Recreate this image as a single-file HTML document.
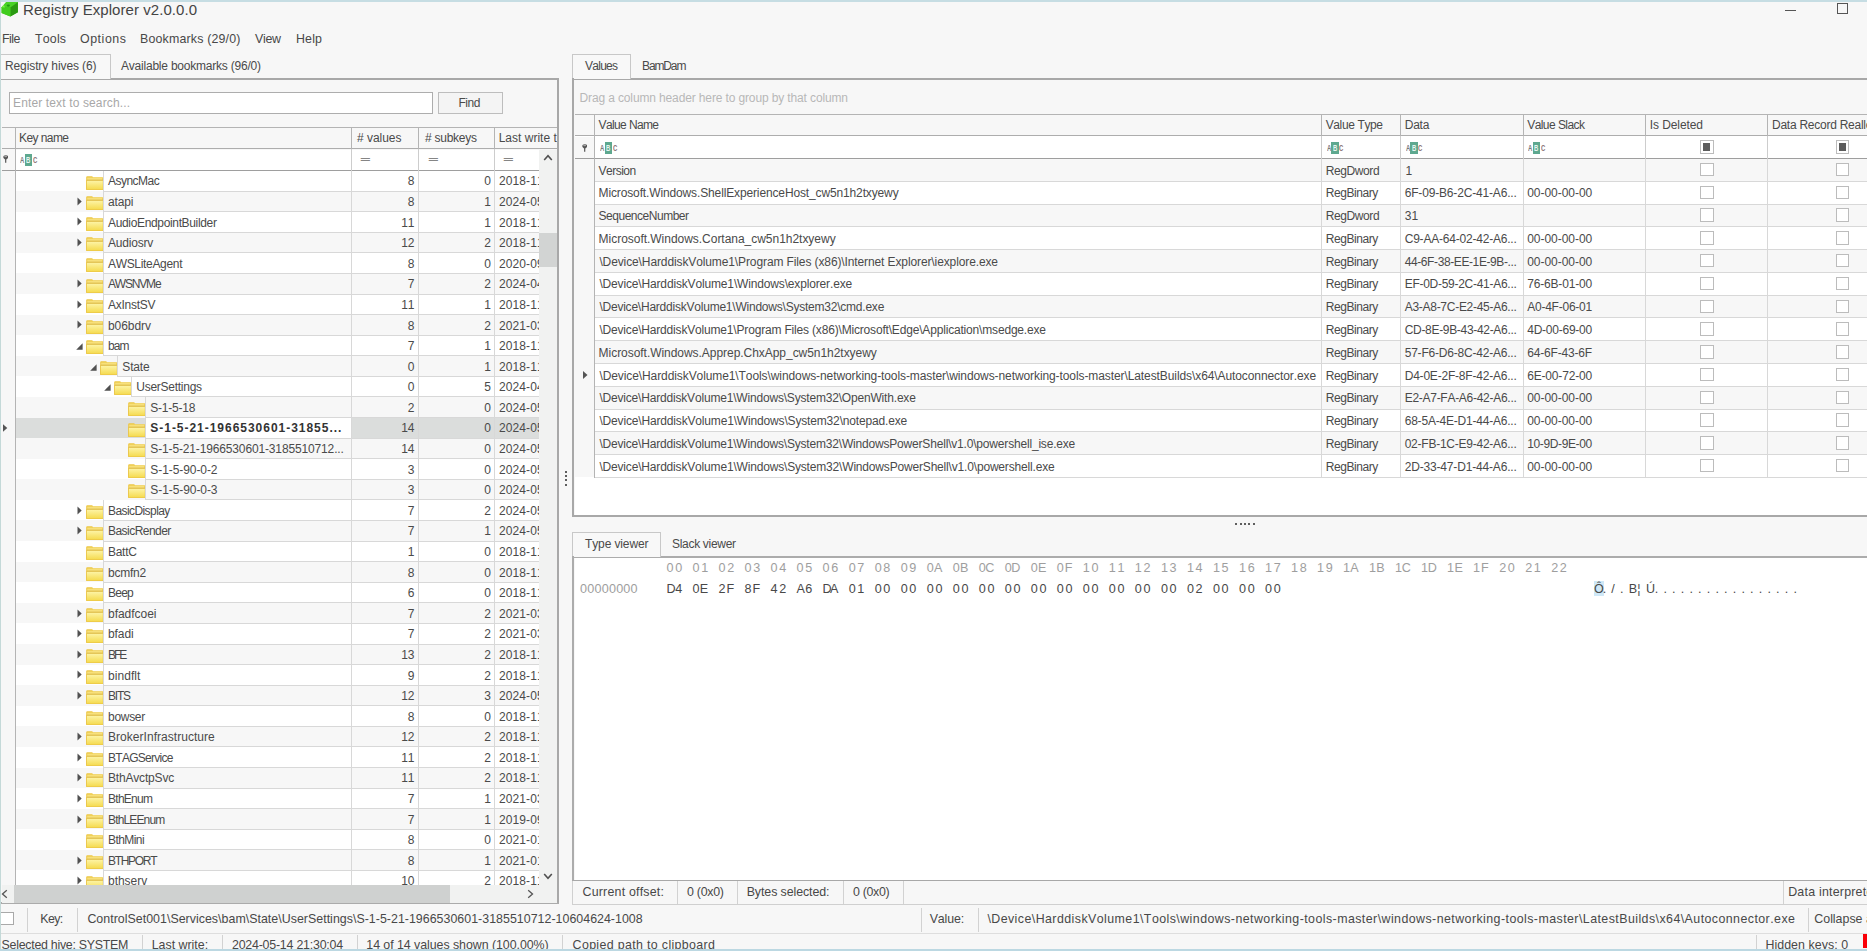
<!DOCTYPE html><html><head><meta charset="utf-8"><title>Registry Explorer v2.0.0.0</title><style>
*{box-sizing:border-box}
html,body{margin:0;padding:0}
body{width:1867px;height:951px;position:relative;overflow:hidden;background:#f7f7f7;font-family:"Liberation Sans",sans-serif;font-size:12px;color:#4a4a4a;line-height:1;font-kerning:none}
.a{position:absolute;white-space:nowrap}
.t{position:absolute;white-space:nowrap;font-size:12px;color:#4a4a4a;height:16px;line-height:16px}
.s{position:absolute;white-space:nowrap;font-size:12.4px;color:#484848;height:18px;line-height:18px}
.r{text-align:right}
.clip{overflow:hidden}
</style></head><body>
<svg class="a" style="left:0px;top:0px" width="20" height="18" viewBox="0 0 20 18">
<polygon points="1.6,7.3 6.3,2 17.9,2 17.9,12.3 10.3,16.4 1.6,13" fill="#3ec41c"/>
<polygon points="1.6,7.3 6.3,2 17.9,2 10.6,7.6" fill="#48d226"/>
<polygon points="10.4,7.6 17.9,2.2 17.9,12.3 10.4,16.4" fill="#2b9a12"/>
<polygon points="1.6,7.3 10.4,7.6 10.4,16.4 1.6,13" fill="#41cc1e"/>
<ellipse cx="8.3" cy="5.6" rx="1.6" ry="1.1" fill="#229a10"/>
<polygon points="1.6,7.3 3.8,4.8 5,7.4" fill="#7af548"/>
</svg>
<div class="a" style="left:23px;top:-0.30px;letter-spacing:0.058px;font-size:15px;color:#444;height:20px;line-height:20px">Registry Explorer v2.0.0.0</div>
<div class="a" style="left:1785px;top:9.5px;width:11px;height:1px;background:#555"></div>
<div class="a" style="left:1836.5px;top:3px;width:11.5px;height:11px;border:1px solid #555"></div>
<div class="s" style="left:2px;top:29.90px;letter-spacing:-0.492px;">File</div>
<div class="s" style="left:35px;top:29.90px;letter-spacing:0.176px;">Tools</div>
<div class="s" style="left:80px;top:29.90px;letter-spacing:0.545px;">Options</div>
<div class="s" style="left:140px;top:29.90px;letter-spacing:0.177px;">Bookmarks (29/0)</div>
<div class="s" style="left:255px;top:29.90px;letter-spacing:-0.289px;">View</div>
<div class="s" style="left:296px;top:29.90px;letter-spacing:0.169px;">Help</div>
<div class="a" style="left:0px;top:78px;width:558.9px;height:1.8px;background:#a8a8a8"></div>
<div class="a" style="left:0px;top:54px;width:111px;height:25px;border:1px solid #c8c8c8;border-bottom:none;background:#f8f8f8"></div>
<div class="t" style="left:5px;top:58.40px;letter-spacing:-0.109px;">Registry hives (6)</div>
<div class="t" style="left:121px;top:58.40px;letter-spacing:-0.215px;">Available bookmarks (96/0)</div>
<div class="a" style="left:557px;top:78px;width:1.9px;height:826px;background:#a8a8a8"></div>
<div class="a" style="left:0px;top:902.3px;width:558.9px;height:1.8px;background:#ababab"></div>
<div class="a" style="left:9px;top:92px;width:424px;height:22px;border:1px solid #adadad;background:#fff"></div>
<div class="t" style="left:13px;top:95.40px;letter-spacing:0.134px;color:#a8a8a8">Enter text to search...</div>
<div class="a" style="left:438px;top:92px;width:65px;height:22px;border:1px solid #bdbdbd;background:#f4f4f4"></div>
<div class="t" style="left:458.5px;top:95.40px;letter-spacing:-0.513px;">Find</div>
<div class="a" style="left:2px;top:127px;width:555px;height:1px;background:#b4b4b4"></div>
<div class="a" style="left:2px;top:148px;width:555px;height:1.2px;background:#adadad"></div>
<div class="a" style="left:15px;top:149.5px;width:525px;height:21px;background:#fff"></div>
<div class="a" style="left:2px;top:170px;width:538px;height:1px;background:#9e9e9e"></div>
<div class="a" style="left:14.5px;top:127px;width:1px;height:22px;background:#b4b4b4"></div>
<div class="a" style="left:14.5px;top:149px;width:1px;height:22px;background:#b4b4b4"></div>
<div class="a" style="left:351px;top:127px;width:1px;height:22px;background:#b4b4b4"></div>
<div class="a" style="left:351px;top:149px;width:1px;height:22px;background:#cdcdcd"></div>
<div class="a" style="left:418px;top:127px;width:1px;height:22px;background:#b4b4b4"></div>
<div class="a" style="left:418px;top:149px;width:1px;height:22px;background:#cdcdcd"></div>
<div class="a" style="left:494px;top:127px;width:1px;height:22px;background:#b4b4b4"></div>
<div class="a" style="left:494px;top:149px;width:1px;height:22px;background:#cdcdcd"></div>
<div class="t" style="left:19px;top:130.40px;letter-spacing:-0.575px;">Key name</div>
<div class="t" style="left:357px;top:130.40px;letter-spacing:-0.027px;"># values</div>
<div class="t" style="left:425px;top:130.40px;letter-spacing:-0.253px;"># subkeys</div>
<div class="t clip" style="left:498.7px;top:130.4px;width:57.9px;letter-spacing:0.006px">Last write timestamp</div>
<svg class="a" style="left:3px;top:155.3px" width="5.4" height="8" viewBox="0 0 5.4 8"><path d="M0.2 1.9Q0.2 0.2 2.7 0.2Q5.2 0.2 5.2 1.9Q5.2 3.2 3.3 4.6V7.8H2.1V4.6Q0.2 3.2 0.2 1.9Z" fill="#555"/><ellipse cx="2.7" cy="1.5" rx="1.5" ry="0.7" fill="#a5a5a5"/></svg>
<div class="a" style="left:20px;top:154px;height:12px;line-height:12px;font-size:8.3px;font-weight:bold;color:#7a7a7a"><span style="display:inline-block;transform:scaleX(.72);transform-origin:0 50%;width:4.5px">A</span><span style="display:inline-block;width:7.6px;height:11.7px;background:#5ea88f;color:#e6f5ef;vertical-align:top"><span style="display:inline-block;transform:scaleX(.72);transform-origin:0 50%;margin-left:1.7px">B</span></span><span style="display:inline-block;transform:scaleX(.72);transform-origin:0 50%;width:5px;margin-left:0.9px;color:#8a7474">C</span></div>
<div class="a" style="left:360px;top:152px;height:16px;line-height:16px;font-size:8.5px;font-weight:bold;color:#858585;transform-origin:0 50%;transform:scaleX(2.15)">=</div>
<div class="a" style="left:427.5px;top:152px;height:16px;line-height:16px;font-size:8.5px;font-weight:bold;color:#858585;transform-origin:0 50%;transform:scaleX(2.15)">=</div>
<div class="a" style="left:503px;top:152px;height:16px;line-height:16px;font-size:8.5px;font-weight:bold;color:#858585;transform-origin:0 50%;transform:scaleX(2.15)">=</div>
<svg width="0" height="0" style="position:absolute"><defs><linearGradient id="fg" x1="0" y1="0" x2="0" y2="1"><stop offset="0" stop-color="#fdf4a6"/><stop offset="1" stop-color="#f5db50"/></linearGradient></defs></svg>
<div class="a clip" style="left:0;top:170.5px;width:557px;height:714px">
<div class="a" style="left:15px;top:0.00px;width:525px;height:20.588px;background:#fff"></div>
<svg class="a" style="left:85.5px;top:5.1px" width="17.5" height="14" viewBox="0 0 17.5 14"><path d="M0.2 1.3Q0.2 0.2 1.3 0.2H5.8Q6.6 0.2 6.9 0.9L7.1 1.3H16.4Q17.3 1.3 17.3 2.2V13.8H0.2Z" fill="#ecc644"/><rect x="1.2" y="1.6" width="15.2" height="2.4" fill="#f7e07a"/><rect x="0.2" y="3.9" width="17.1" height="10" rx="0.6" fill="#e9c244"/><rect x="0.9" y="4.6" width="15.9" height="8.8" fill="url(#fg)"/><rect x="0.9" y="3.7" width="15.9" height="0.8" fill="#d8b546"/></svg>
<div class="t" style="left:108px;top:2.89px;letter-spacing:-0.521px;">AsyncMac</div>
<div class="t r" style="left:354.5px;width:60px;top:2.89px;">8</div>
<div class="t r" style="left:431px;width:60px;top:2.89px;">0</div>
<div class="t clip" style="left:499px;width:41px;top:2.89px;letter-spacing:0.1px">2018-11-14 06:56:33</div>
<div class="a" style="left:15px;top:20.59px;width:525px;height:20.588px;background:#f7f7f7"></div>
<svg class="a" style="left:76.5px;top:26.38px" width="6" height="9" viewBox="0 0 6 9"><path d="M0.5 0.6L4.7 4.5L0.5 8.4Z" fill="#505050"/></svg>
<svg class="a" style="left:85.5px;top:25.69px" width="17.5" height="14" viewBox="0 0 17.5 14"><path d="M0.2 1.3Q0.2 0.2 1.3 0.2H5.8Q6.6 0.2 6.9 0.9L7.1 1.3H16.4Q17.3 1.3 17.3 2.2V13.8H0.2Z" fill="#ecc644"/><rect x="1.2" y="1.6" width="15.2" height="2.4" fill="#f7e07a"/><rect x="0.2" y="3.9" width="17.1" height="10" rx="0.6" fill="#e9c244"/><rect x="0.9" y="4.6" width="15.9" height="8.8" fill="url(#fg)"/><rect x="0.9" y="3.7" width="15.9" height="0.8" fill="#d8b546"/></svg>
<div class="t" style="left:108px;top:23.48px;letter-spacing:-0.154px;">atapi</div>
<div class="t r" style="left:354.5px;width:60px;top:23.48px;">8</div>
<div class="t r" style="left:431px;width:60px;top:23.48px;">1</div>
<div class="t clip" style="left:499px;width:41px;top:23.48px;letter-spacing:0.1px">2024-05-14 21:07:11</div>
<div class="a" style="left:15px;top:41.18px;width:525px;height:20.588px;background:#fff"></div>
<svg class="a" style="left:76.5px;top:46.97px" width="6" height="9" viewBox="0 0 6 9"><path d="M0.5 0.6L4.7 4.5L0.5 8.4Z" fill="#505050"/></svg>
<svg class="a" style="left:85.5px;top:46.28px" width="17.5" height="14" viewBox="0 0 17.5 14"><path d="M0.2 1.3Q0.2 0.2 1.3 0.2H5.8Q6.6 0.2 6.9 0.9L7.1 1.3H16.4Q17.3 1.3 17.3 2.2V13.8H0.2Z" fill="#ecc644"/><rect x="1.2" y="1.6" width="15.2" height="2.4" fill="#f7e07a"/><rect x="0.2" y="3.9" width="17.1" height="10" rx="0.6" fill="#e9c244"/><rect x="0.9" y="4.6" width="15.9" height="8.8" fill="url(#fg)"/><rect x="0.9" y="3.7" width="15.9" height="0.8" fill="#d8b546"/></svg>
<div class="t" style="left:108px;top:44.07px;letter-spacing:-0.342px;">AudioEndpointBuilder</div>
<div class="t r" style="left:354.5px;width:60px;top:44.07px;">11</div>
<div class="t r" style="left:431px;width:60px;top:44.07px;">1</div>
<div class="t clip" style="left:499px;width:41px;top:44.07px;letter-spacing:0.1px">2018-11-14 06:56:33</div>
<div class="a" style="left:15px;top:61.76px;width:525px;height:20.588px;background:#f7f7f7"></div>
<svg class="a" style="left:76.5px;top:67.56px" width="6" height="9" viewBox="0 0 6 9"><path d="M0.5 0.6L4.7 4.5L0.5 8.4Z" fill="#505050"/></svg>
<svg class="a" style="left:85.5px;top:66.86px" width="17.5" height="14" viewBox="0 0 17.5 14"><path d="M0.2 1.3Q0.2 0.2 1.3 0.2H5.8Q6.6 0.2 6.9 0.9L7.1 1.3H16.4Q17.3 1.3 17.3 2.2V13.8H0.2Z" fill="#ecc644"/><rect x="1.2" y="1.6" width="15.2" height="2.4" fill="#f7e07a"/><rect x="0.2" y="3.9" width="17.1" height="10" rx="0.6" fill="#e9c244"/><rect x="0.9" y="4.6" width="15.9" height="8.8" fill="url(#fg)"/><rect x="0.9" y="3.7" width="15.9" height="0.8" fill="#d8b546"/></svg>
<div class="t" style="left:108px;top:64.66px;letter-spacing:-0.197px;">Audiosrv</div>
<div class="t r" style="left:354.5px;width:60px;top:64.66px;">12</div>
<div class="t r" style="left:431px;width:60px;top:64.66px;">2</div>
<div class="t clip" style="left:499px;width:41px;top:64.66px;letter-spacing:0.1px">2018-11-14 06:56:33</div>
<div class="a" style="left:15px;top:82.35px;width:525px;height:20.588px;background:#fff"></div>
<svg class="a" style="left:85.5px;top:87.45px" width="17.5" height="14" viewBox="0 0 17.5 14"><path d="M0.2 1.3Q0.2 0.2 1.3 0.2H5.8Q6.6 0.2 6.9 0.9L7.1 1.3H16.4Q17.3 1.3 17.3 2.2V13.8H0.2Z" fill="#ecc644"/><rect x="1.2" y="1.6" width="15.2" height="2.4" fill="#f7e07a"/><rect x="0.2" y="3.9" width="17.1" height="10" rx="0.6" fill="#e9c244"/><rect x="0.9" y="4.6" width="15.9" height="8.8" fill="url(#fg)"/><rect x="0.9" y="3.7" width="15.9" height="0.8" fill="#d8b546"/></svg>
<div class="t" style="left:108px;top:85.25px;letter-spacing:-0.321px;">AWSLiteAgent</div>
<div class="t r" style="left:354.5px;width:60px;top:85.25px;">8</div>
<div class="t r" style="left:431px;width:60px;top:85.25px;">0</div>
<div class="t clip" style="left:499px;width:41px;top:85.25px;letter-spacing:0.1px">2020-09-09 03:11:02</div>
<div class="a" style="left:15px;top:102.94px;width:525px;height:20.588px;background:#f7f7f7"></div>
<svg class="a" style="left:76.5px;top:108.73px" width="6" height="9" viewBox="0 0 6 9"><path d="M0.5 0.6L4.7 4.5L0.5 8.4Z" fill="#505050"/></svg>
<svg class="a" style="left:85.5px;top:108.04px" width="17.5" height="14" viewBox="0 0 17.5 14"><path d="M0.2 1.3Q0.2 0.2 1.3 0.2H5.8Q6.6 0.2 6.9 0.9L7.1 1.3H16.4Q17.3 1.3 17.3 2.2V13.8H0.2Z" fill="#ecc644"/><rect x="1.2" y="1.6" width="15.2" height="2.4" fill="#f7e07a"/><rect x="0.2" y="3.9" width="17.1" height="10" rx="0.6" fill="#e9c244"/><rect x="0.9" y="4.6" width="15.9" height="8.8" fill="url(#fg)"/><rect x="0.9" y="3.7" width="15.9" height="0.8" fill="#d8b546"/></svg>
<div class="t" style="left:108px;top:105.83px;letter-spacing:-1.178px;">AWSNVMe</div>
<div class="t r" style="left:354.5px;width:60px;top:105.83px;">7</div>
<div class="t r" style="left:431px;width:60px;top:105.83px;">2</div>
<div class="t clip" style="left:499px;width:41px;top:105.83px;letter-spacing:0.1px">2024-04-25 16:21:00</div>
<div class="a" style="left:15px;top:123.53px;width:525px;height:20.588px;background:#fff"></div>
<svg class="a" style="left:76.5px;top:129.32px" width="6" height="9" viewBox="0 0 6 9"><path d="M0.5 0.6L4.7 4.5L0.5 8.4Z" fill="#505050"/></svg>
<svg class="a" style="left:85.5px;top:128.63px" width="17.5" height="14" viewBox="0 0 17.5 14"><path d="M0.2 1.3Q0.2 0.2 1.3 0.2H5.8Q6.6 0.2 6.9 0.9L7.1 1.3H16.4Q17.3 1.3 17.3 2.2V13.8H0.2Z" fill="#ecc644"/><rect x="1.2" y="1.6" width="15.2" height="2.4" fill="#f7e07a"/><rect x="0.2" y="3.9" width="17.1" height="10" rx="0.6" fill="#e9c244"/><rect x="0.9" y="4.6" width="15.9" height="8.8" fill="url(#fg)"/><rect x="0.9" y="3.7" width="15.9" height="0.8" fill="#d8b546"/></svg>
<div class="t" style="left:108px;top:126.42px;letter-spacing:-0.265px;">AxInstSV</div>
<div class="t r" style="left:354.5px;width:60px;top:126.42px;">11</div>
<div class="t r" style="left:431px;width:60px;top:126.42px;">1</div>
<div class="t clip" style="left:499px;width:41px;top:126.42px;letter-spacing:0.1px">2018-11-14 06:56:33</div>
<div class="a" style="left:15px;top:144.12px;width:525px;height:20.588px;background:#f7f7f7"></div>
<svg class="a" style="left:76.5px;top:149.91px" width="6" height="9" viewBox="0 0 6 9"><path d="M0.5 0.6L4.7 4.5L0.5 8.4Z" fill="#505050"/></svg>
<svg class="a" style="left:85.5px;top:149.22px" width="17.5" height="14" viewBox="0 0 17.5 14"><path d="M0.2 1.3Q0.2 0.2 1.3 0.2H5.8Q6.6 0.2 6.9 0.9L7.1 1.3H16.4Q17.3 1.3 17.3 2.2V13.8H0.2Z" fill="#ecc644"/><rect x="1.2" y="1.6" width="15.2" height="2.4" fill="#f7e07a"/><rect x="0.2" y="3.9" width="17.1" height="10" rx="0.6" fill="#e9c244"/><rect x="0.9" y="4.6" width="15.9" height="8.8" fill="url(#fg)"/><rect x="0.9" y="3.7" width="15.9" height="0.8" fill="#d8b546"/></svg>
<div class="t" style="left:108px;top:147.01px;letter-spacing:-0.059px;">b06bdrv</div>
<div class="t r" style="left:354.5px;width:60px;top:147.01px;">8</div>
<div class="t r" style="left:431px;width:60px;top:147.01px;">2</div>
<div class="t clip" style="left:499px;width:41px;top:147.01px;letter-spacing:0.1px">2021-03-08 11:21:02</div>
<div class="a" style="left:15px;top:164.70px;width:525px;height:20.588px;background:#fff"></div>
<svg class="a" style="left:75.8px;top:172.80px" width="7" height="7" viewBox="0 0 7 7"><path d="M6.6 0.2V6.8H0.2Z" fill="#505050"/></svg>
<svg class="a" style="left:85.5px;top:169.8px" width="17.5" height="14" viewBox="0 0 17.5 14"><path d="M0.2 1.3Q0.2 0.2 1.3 0.2H5.8Q6.6 0.2 6.9 0.9L7.1 1.3H16.4Q17.3 1.3 17.3 2.2V13.8H0.2Z" fill="#ecc644"/><rect x="1.2" y="1.6" width="15.2" height="2.4" fill="#f7e07a"/><rect x="0.2" y="3.9" width="17.1" height="10" rx="0.6" fill="#e9c244"/><rect x="0.9" y="4.6" width="15.9" height="8.8" fill="url(#fg)"/><rect x="0.9" y="3.7" width="15.9" height="0.8" fill="#d8b546"/></svg>
<div class="t" style="left:108px;top:167.60px;letter-spacing:-0.920px;">bam</div>
<div class="t r" style="left:354.5px;width:60px;top:167.60px;">7</div>
<div class="t r" style="left:431px;width:60px;top:167.60px;">1</div>
<div class="t clip" style="left:499px;width:41px;top:167.60px;letter-spacing:0.1px">2018-11-14 06:56:33</div>
<div class="a" style="left:15px;top:185.29px;width:525px;height:20.588px;background:#f7f7f7"></div>
<svg class="a" style="left:89.8px;top:193.39px" width="7" height="7" viewBox="0 0 7 7"><path d="M6.6 0.2V6.8H0.2Z" fill="#505050"/></svg>
<svg class="a" style="left:99.5px;top:190.39px" width="17.5" height="14" viewBox="0 0 17.5 14"><path d="M0.2 1.3Q0.2 0.2 1.3 0.2H5.8Q6.6 0.2 6.9 0.9L7.1 1.3H16.4Q17.3 1.3 17.3 2.2V13.8H0.2Z" fill="#ecc644"/><rect x="1.2" y="1.6" width="15.2" height="2.4" fill="#f7e07a"/><rect x="0.2" y="3.9" width="17.1" height="10" rx="0.6" fill="#e9c244"/><rect x="0.9" y="4.6" width="15.9" height="8.8" fill="url(#fg)"/><rect x="0.9" y="3.7" width="15.9" height="0.8" fill="#d8b546"/></svg>
<div class="t" style="left:122.3px;top:188.19px;letter-spacing:-0.155px;">State</div>
<div class="t r" style="left:354.5px;width:60px;top:188.19px;">0</div>
<div class="t r" style="left:431px;width:60px;top:188.19px;">1</div>
<div class="t clip" style="left:499px;width:41px;top:188.19px;letter-spacing:0.1px">2018-11-14 06:56:33</div>
<div class="a" style="left:15px;top:205.88px;width:525px;height:20.588px;background:#fff"></div>
<svg class="a" style="left:103.8px;top:213.97px" width="7" height="7" viewBox="0 0 7 7"><path d="M6.6 0.2V6.8H0.2Z" fill="#505050"/></svg>
<svg class="a" style="left:113.5px;top:210.98px" width="17.5" height="14" viewBox="0 0 17.5 14"><path d="M0.2 1.3Q0.2 0.2 1.3 0.2H5.8Q6.6 0.2 6.9 0.9L7.1 1.3H16.4Q17.3 1.3 17.3 2.2V13.8H0.2Z" fill="#ecc644"/><rect x="1.2" y="1.6" width="15.2" height="2.4" fill="#f7e07a"/><rect x="0.2" y="3.9" width="17.1" height="10" rx="0.6" fill="#e9c244"/><rect x="0.9" y="4.6" width="15.9" height="8.8" fill="url(#fg)"/><rect x="0.9" y="3.7" width="15.9" height="0.8" fill="#d8b546"/></svg>
<div class="t" style="left:136.3px;top:208.77px;letter-spacing:-0.263px;">UserSettings</div>
<div class="t r" style="left:354.5px;width:60px;top:208.77px;">0</div>
<div class="t r" style="left:431px;width:60px;top:208.77px;">5</div>
<div class="t clip" style="left:499px;width:41px;top:208.77px;letter-spacing:0.1px">2024-04-25 16:21:00</div>
<div class="a" style="left:15px;top:226.47px;width:525px;height:20.588px;background:#f7f7f7"></div>
<svg class="a" style="left:127.5px;top:231.57px" width="17.5" height="14" viewBox="0 0 17.5 14"><path d="M0.2 1.3Q0.2 0.2 1.3 0.2H5.8Q6.6 0.2 6.9 0.9L7.1 1.3H16.4Q17.3 1.3 17.3 2.2V13.8H0.2Z" fill="#ecc644"/><rect x="1.2" y="1.6" width="15.2" height="2.4" fill="#f7e07a"/><rect x="0.2" y="3.9" width="17.1" height="10" rx="0.6" fill="#e9c244"/><rect x="0.9" y="4.6" width="15.9" height="8.8" fill="url(#fg)"/><rect x="0.9" y="3.7" width="15.9" height="0.8" fill="#d8b546"/></svg>
<div class="t" style="left:150.3px;top:229.36px;letter-spacing:-0.226px;">S-1-5-18</div>
<div class="t r" style="left:354.5px;width:60px;top:229.36px;">2</div>
<div class="t r" style="left:431px;width:60px;top:229.36px;">0</div>
<div class="t clip" style="left:499px;width:41px;top:229.36px;letter-spacing:0.1px">2024-05-14 21:07:11</div>
<div class="a" style="left:15px;top:247.06px;width:525px;height:20.588px;background:#dbdddc"></div>
<div class="a" style="left:145.3px;top:247.06px;width:205.7px;height:20.588px;background:#fff"></div>
<svg class="a" style="left:127.5px;top:252.16px" width="17.5" height="14" viewBox="0 0 17.5 14"><path d="M0.2 1.3Q0.2 0.2 1.3 0.2H5.8Q6.6 0.2 6.9 0.9L7.1 1.3H16.4Q17.3 1.3 17.3 2.2V13.8H0.2Z" fill="#ecc644"/><rect x="1.2" y="1.6" width="15.2" height="2.4" fill="#f7e07a"/><rect x="0.2" y="3.9" width="17.1" height="10" rx="0.6" fill="#e9c244"/><rect x="0.9" y="4.6" width="15.9" height="8.8" fill="url(#fg)"/><rect x="0.9" y="3.7" width="15.9" height="0.8" fill="#d8b546"/></svg>
<div class="t" style="left:150.3px;top:249.95px;letter-spacing:0.972px;font-weight:bold;color:#333;">S-1-5-21-1966530601-31855...</div>
<div class="t r" style="left:354.5px;width:60px;top:249.95px;">14</div>
<div class="t r" style="left:431px;width:60px;top:249.95px;">0</div>
<div class="t clip" style="left:499px;width:41px;top:249.95px;letter-spacing:0.1px">2024-05-14 21:30:04</div>
<svg class="a" style="left:3.4px;top:253.45px" width="5" height="8" viewBox="0 0 5 8"><path d="M0 0.2L4.3 4L0 7.8Z" fill="#555"/></svg>
<div class="a" style="left:15px;top:267.64px;width:525px;height:20.588px;background:#f7f7f7"></div>
<svg class="a" style="left:127.5px;top:272.74px" width="17.5" height="14" viewBox="0 0 17.5 14"><path d="M0.2 1.3Q0.2 0.2 1.3 0.2H5.8Q6.6 0.2 6.9 0.9L7.1 1.3H16.4Q17.3 1.3 17.3 2.2V13.8H0.2Z" fill="#ecc644"/><rect x="1.2" y="1.6" width="15.2" height="2.4" fill="#f7e07a"/><rect x="0.2" y="3.9" width="17.1" height="10" rx="0.6" fill="#e9c244"/><rect x="0.9" y="4.6" width="15.9" height="8.8" fill="url(#fg)"/><rect x="0.9" y="3.7" width="15.9" height="0.8" fill="#d8b546"/></svg>
<div class="t" style="left:150.3px;top:270.54px;letter-spacing:-0.144px;">S-1-5-21-1966530601-3185510712...</div>
<div class="t r" style="left:354.5px;width:60px;top:270.54px;">14</div>
<div class="t r" style="left:431px;width:60px;top:270.54px;">0</div>
<div class="t clip" style="left:499px;width:41px;top:270.54px;letter-spacing:0.1px">2024-05-14 21:07:11</div>
<div class="a" style="left:15px;top:288.23px;width:525px;height:20.588px;background:#fff"></div>
<svg class="a" style="left:127.5px;top:293.33px" width="17.5" height="14" viewBox="0 0 17.5 14"><path d="M0.2 1.3Q0.2 0.2 1.3 0.2H5.8Q6.6 0.2 6.9 0.9L7.1 1.3H16.4Q17.3 1.3 17.3 2.2V13.8H0.2Z" fill="#ecc644"/><rect x="1.2" y="1.6" width="15.2" height="2.4" fill="#f7e07a"/><rect x="0.2" y="3.9" width="17.1" height="10" rx="0.6" fill="#e9c244"/><rect x="0.9" y="4.6" width="15.9" height="8.8" fill="url(#fg)"/><rect x="0.9" y="3.7" width="15.9" height="0.8" fill="#d8b546"/></svg>
<div class="t" style="left:150.3px;top:291.13px;letter-spacing:-0.074px;">S-1-5-90-0-2</div>
<div class="t r" style="left:354.5px;width:60px;top:291.13px;">3</div>
<div class="t r" style="left:431px;width:60px;top:291.13px;">0</div>
<div class="t clip" style="left:499px;width:41px;top:291.13px;letter-spacing:0.1px">2024-05-14 21:07:11</div>
<div class="a" style="left:15px;top:308.82px;width:525px;height:20.588px;background:#f7f7f7"></div>
<svg class="a" style="left:127.5px;top:313.92px" width="17.5" height="14" viewBox="0 0 17.5 14"><path d="M0.2 1.3Q0.2 0.2 1.3 0.2H5.8Q6.6 0.2 6.9 0.9L7.1 1.3H16.4Q17.3 1.3 17.3 2.2V13.8H0.2Z" fill="#ecc644"/><rect x="1.2" y="1.6" width="15.2" height="2.4" fill="#f7e07a"/><rect x="0.2" y="3.9" width="17.1" height="10" rx="0.6" fill="#e9c244"/><rect x="0.9" y="4.6" width="15.9" height="8.8" fill="url(#fg)"/><rect x="0.9" y="3.7" width="15.9" height="0.8" fill="#d8b546"/></svg>
<div class="t" style="left:150.3px;top:311.71px;letter-spacing:-0.074px;">S-1-5-90-0-3</div>
<div class="t r" style="left:354.5px;width:60px;top:311.71px;">3</div>
<div class="t r" style="left:431px;width:60px;top:311.71px;">0</div>
<div class="t clip" style="left:499px;width:41px;top:311.71px;letter-spacing:0.1px">2024-05-14 21:07:11</div>
<div class="a" style="left:15px;top:329.41px;width:525px;height:20.588px;background:#fff"></div>
<svg class="a" style="left:76.5px;top:335.20px" width="6" height="9" viewBox="0 0 6 9"><path d="M0.5 0.6L4.7 4.5L0.5 8.4Z" fill="#505050"/></svg>
<svg class="a" style="left:85.5px;top:334.51px" width="17.5" height="14" viewBox="0 0 17.5 14"><path d="M0.2 1.3Q0.2 0.2 1.3 0.2H5.8Q6.6 0.2 6.9 0.9L7.1 1.3H16.4Q17.3 1.3 17.3 2.2V13.8H0.2Z" fill="#ecc644"/><rect x="1.2" y="1.6" width="15.2" height="2.4" fill="#f7e07a"/><rect x="0.2" y="3.9" width="17.1" height="10" rx="0.6" fill="#e9c244"/><rect x="0.9" y="4.6" width="15.9" height="8.8" fill="url(#fg)"/><rect x="0.9" y="3.7" width="15.9" height="0.8" fill="#d8b546"/></svg>
<div class="t" style="left:108px;top:332.30px;letter-spacing:-0.580px;">BasicDisplay</div>
<div class="t r" style="left:354.5px;width:60px;top:332.30px;">7</div>
<div class="t r" style="left:431px;width:60px;top:332.30px;">2</div>
<div class="t clip" style="left:499px;width:41px;top:332.30px;letter-spacing:0.1px">2024-05-14 21:07:11</div>
<div class="a" style="left:15px;top:350.00px;width:525px;height:20.588px;background:#f7f7f7"></div>
<svg class="a" style="left:76.5px;top:355.79px" width="6" height="9" viewBox="0 0 6 9"><path d="M0.5 0.6L4.7 4.5L0.5 8.4Z" fill="#505050"/></svg>
<svg class="a" style="left:85.5px;top:355.1px" width="17.5" height="14" viewBox="0 0 17.5 14"><path d="M0.2 1.3Q0.2 0.2 1.3 0.2H5.8Q6.6 0.2 6.9 0.9L7.1 1.3H16.4Q17.3 1.3 17.3 2.2V13.8H0.2Z" fill="#ecc644"/><rect x="1.2" y="1.6" width="15.2" height="2.4" fill="#f7e07a"/><rect x="0.2" y="3.9" width="17.1" height="10" rx="0.6" fill="#e9c244"/><rect x="0.9" y="4.6" width="15.9" height="8.8" fill="url(#fg)"/><rect x="0.9" y="3.7" width="15.9" height="0.8" fill="#d8b546"/></svg>
<div class="t" style="left:108px;top:352.89px;letter-spacing:-0.539px;">BasicRender</div>
<div class="t r" style="left:354.5px;width:60px;top:352.89px;">7</div>
<div class="t r" style="left:431px;width:60px;top:352.89px;">1</div>
<div class="t clip" style="left:499px;width:41px;top:352.89px;letter-spacing:0.1px">2024-05-14 21:07:11</div>
<div class="a" style="left:15px;top:370.58px;width:525px;height:20.588px;background:#fff"></div>
<svg class="a" style="left:85.5px;top:375.68px" width="17.5" height="14" viewBox="0 0 17.5 14"><path d="M0.2 1.3Q0.2 0.2 1.3 0.2H5.8Q6.6 0.2 6.9 0.9L7.1 1.3H16.4Q17.3 1.3 17.3 2.2V13.8H0.2Z" fill="#ecc644"/><rect x="1.2" y="1.6" width="15.2" height="2.4" fill="#f7e07a"/><rect x="0.2" y="3.9" width="17.1" height="10" rx="0.6" fill="#e9c244"/><rect x="0.9" y="4.6" width="15.9" height="8.8" fill="url(#fg)"/><rect x="0.9" y="3.7" width="15.9" height="0.8" fill="#d8b546"/></svg>
<div class="t" style="left:108px;top:373.48px;letter-spacing:-0.278px;">BattC</div>
<div class="t r" style="left:354.5px;width:60px;top:373.48px;">1</div>
<div class="t r" style="left:431px;width:60px;top:373.48px;">0</div>
<div class="t clip" style="left:499px;width:41px;top:373.48px;letter-spacing:0.1px">2018-11-14 06:56:33</div>
<div class="a" style="left:15px;top:391.17px;width:525px;height:20.588px;background:#f7f7f7"></div>
<svg class="a" style="left:85.5px;top:396.27px" width="17.5" height="14" viewBox="0 0 17.5 14"><path d="M0.2 1.3Q0.2 0.2 1.3 0.2H5.8Q6.6 0.2 6.9 0.9L7.1 1.3H16.4Q17.3 1.3 17.3 2.2V13.8H0.2Z" fill="#ecc644"/><rect x="1.2" y="1.6" width="15.2" height="2.4" fill="#f7e07a"/><rect x="0.2" y="3.9" width="17.1" height="10" rx="0.6" fill="#e9c244"/><rect x="0.9" y="4.6" width="15.9" height="8.8" fill="url(#fg)"/><rect x="0.9" y="3.7" width="15.9" height="0.8" fill="#d8b546"/></svg>
<div class="t" style="left:108px;top:394.07px;letter-spacing:-0.230px;">bcmfn2</div>
<div class="t r" style="left:354.5px;width:60px;top:394.07px;">8</div>
<div class="t r" style="left:431px;width:60px;top:394.07px;">0</div>
<div class="t clip" style="left:499px;width:41px;top:394.07px;letter-spacing:0.1px">2018-11-14 06:56:33</div>
<div class="a" style="left:15px;top:411.76px;width:525px;height:20.588px;background:#fff"></div>
<svg class="a" style="left:85.5px;top:416.86px" width="17.5" height="14" viewBox="0 0 17.5 14"><path d="M0.2 1.3Q0.2 0.2 1.3 0.2H5.8Q6.6 0.2 6.9 0.9L7.1 1.3H16.4Q17.3 1.3 17.3 2.2V13.8H0.2Z" fill="#ecc644"/><rect x="1.2" y="1.6" width="15.2" height="2.4" fill="#f7e07a"/><rect x="0.2" y="3.9" width="17.1" height="10" rx="0.6" fill="#e9c244"/><rect x="0.9" y="4.6" width="15.9" height="8.8" fill="url(#fg)"/><rect x="0.9" y="3.7" width="15.9" height="0.8" fill="#d8b546"/></svg>
<div class="t" style="left:108px;top:414.65px;letter-spacing:-0.773px;">Beep</div>
<div class="t r" style="left:354.5px;width:60px;top:414.65px;">6</div>
<div class="t r" style="left:431px;width:60px;top:414.65px;">0</div>
<div class="t clip" style="left:499px;width:41px;top:414.65px;letter-spacing:0.1px">2018-11-14 06:56:33</div>
<div class="a" style="left:15px;top:432.35px;width:525px;height:20.588px;background:#f7f7f7"></div>
<svg class="a" style="left:76.5px;top:438.14px" width="6" height="9" viewBox="0 0 6 9"><path d="M0.5 0.6L4.7 4.5L0.5 8.4Z" fill="#505050"/></svg>
<svg class="a" style="left:85.5px;top:437.45px" width="17.5" height="14" viewBox="0 0 17.5 14"><path d="M0.2 1.3Q0.2 0.2 1.3 0.2H5.8Q6.6 0.2 6.9 0.9L7.1 1.3H16.4Q17.3 1.3 17.3 2.2V13.8H0.2Z" fill="#ecc644"/><rect x="1.2" y="1.6" width="15.2" height="2.4" fill="#f7e07a"/><rect x="0.2" y="3.9" width="17.1" height="10" rx="0.6" fill="#e9c244"/><rect x="0.9" y="4.6" width="15.9" height="8.8" fill="url(#fg)"/><rect x="0.9" y="3.7" width="15.9" height="0.8" fill="#d8b546"/></svg>
<div class="t" style="left:108px;top:435.24px;letter-spacing:-0.024px;">bfadfcoei</div>
<div class="t r" style="left:354.5px;width:60px;top:435.24px;">7</div>
<div class="t r" style="left:431px;width:60px;top:435.24px;">2</div>
<div class="t clip" style="left:499px;width:41px;top:435.24px;letter-spacing:0.1px">2021-03-08 11:21:02</div>
<div class="a" style="left:15px;top:452.94px;width:525px;height:20.588px;background:#fff"></div>
<svg class="a" style="left:76.5px;top:458.73px" width="6" height="9" viewBox="0 0 6 9"><path d="M0.5 0.6L4.7 4.5L0.5 8.4Z" fill="#505050"/></svg>
<svg class="a" style="left:85.5px;top:458.04px" width="17.5" height="14" viewBox="0 0 17.5 14"><path d="M0.2 1.3Q0.2 0.2 1.3 0.2H5.8Q6.6 0.2 6.9 0.9L7.1 1.3H16.4Q17.3 1.3 17.3 2.2V13.8H0.2Z" fill="#ecc644"/><rect x="1.2" y="1.6" width="15.2" height="2.4" fill="#f7e07a"/><rect x="0.2" y="3.9" width="17.1" height="10" rx="0.6" fill="#e9c244"/><rect x="0.9" y="4.6" width="15.9" height="8.8" fill="url(#fg)"/><rect x="0.9" y="3.7" width="15.9" height="0.8" fill="#d8b546"/></svg>
<div class="t" style="left:108px;top:455.83px;letter-spacing:-0.079px;">bfadi</div>
<div class="t r" style="left:354.5px;width:60px;top:455.83px;">7</div>
<div class="t r" style="left:431px;width:60px;top:455.83px;">2</div>
<div class="t clip" style="left:499px;width:41px;top:455.83px;letter-spacing:0.1px">2021-03-08 11:21:02</div>
<div class="a" style="left:15px;top:473.52px;width:525px;height:20.588px;background:#f7f7f7"></div>
<svg class="a" style="left:76.5px;top:479.32px" width="6" height="9" viewBox="0 0 6 9"><path d="M0.5 0.6L4.7 4.5L0.5 8.4Z" fill="#505050"/></svg>
<svg class="a" style="left:85.5px;top:478.62px" width="17.5" height="14" viewBox="0 0 17.5 14"><path d="M0.2 1.3Q0.2 0.2 1.3 0.2H5.8Q6.6 0.2 6.9 0.9L7.1 1.3H16.4Q17.3 1.3 17.3 2.2V13.8H0.2Z" fill="#ecc644"/><rect x="1.2" y="1.6" width="15.2" height="2.4" fill="#f7e07a"/><rect x="0.2" y="3.9" width="17.1" height="10" rx="0.6" fill="#e9c244"/><rect x="0.9" y="4.6" width="15.9" height="8.8" fill="url(#fg)"/><rect x="0.9" y="3.7" width="15.9" height="0.8" fill="#d8b546"/></svg>
<div class="t" style="left:108px;top:476.42px;letter-spacing:-2.070px;">BFE</div>
<div class="t r" style="left:354.5px;width:60px;top:476.42px;">13</div>
<div class="t r" style="left:431px;width:60px;top:476.42px;">2</div>
<div class="t clip" style="left:499px;width:41px;top:476.42px;letter-spacing:0.1px">2018-11-14 06:56:33</div>
<div class="a" style="left:15px;top:494.11px;width:525px;height:20.588px;background:#fff"></div>
<svg class="a" style="left:76.5px;top:499.91px" width="6" height="9" viewBox="0 0 6 9"><path d="M0.5 0.6L4.7 4.5L0.5 8.4Z" fill="#505050"/></svg>
<svg class="a" style="left:85.5px;top:499.21px" width="17.5" height="14" viewBox="0 0 17.5 14"><path d="M0.2 1.3Q0.2 0.2 1.3 0.2H5.8Q6.6 0.2 6.9 0.9L7.1 1.3H16.4Q17.3 1.3 17.3 2.2V13.8H0.2Z" fill="#ecc644"/><rect x="1.2" y="1.6" width="15.2" height="2.4" fill="#f7e07a"/><rect x="0.2" y="3.9" width="17.1" height="10" rx="0.6" fill="#e9c244"/><rect x="0.9" y="4.6" width="15.9" height="8.8" fill="url(#fg)"/><rect x="0.9" y="3.7" width="15.9" height="0.8" fill="#d8b546"/></svg>
<div class="t" style="left:108px;top:497.01px;letter-spacing:0.064px;">bindflt</div>
<div class="t r" style="left:354.5px;width:60px;top:497.01px;">9</div>
<div class="t r" style="left:431px;width:60px;top:497.01px;">2</div>
<div class="t clip" style="left:499px;width:41px;top:497.01px;letter-spacing:0.1px">2018-11-14 06:56:33</div>
<div class="a" style="left:15px;top:514.70px;width:525px;height:20.588px;background:#f7f7f7"></div>
<svg class="a" style="left:76.5px;top:520.49px" width="6" height="9" viewBox="0 0 6 9"><path d="M0.5 0.6L4.7 4.5L0.5 8.4Z" fill="#505050"/></svg>
<svg class="a" style="left:85.5px;top:519.8px" width="17.5" height="14" viewBox="0 0 17.5 14"><path d="M0.2 1.3Q0.2 0.2 1.3 0.2H5.8Q6.6 0.2 6.9 0.9L7.1 1.3H16.4Q17.3 1.3 17.3 2.2V13.8H0.2Z" fill="#ecc644"/><rect x="1.2" y="1.6" width="15.2" height="2.4" fill="#f7e07a"/><rect x="0.2" y="3.9" width="17.1" height="10" rx="0.6" fill="#e9c244"/><rect x="0.9" y="4.6" width="15.9" height="8.8" fill="url(#fg)"/><rect x="0.9" y="3.7" width="15.9" height="0.8" fill="#d8b546"/></svg>
<div class="t" style="left:108px;top:517.59px;letter-spacing:-1.192px;">BITS</div>
<div class="t r" style="left:354.5px;width:60px;top:517.59px;">12</div>
<div class="t r" style="left:431px;width:60px;top:517.59px;">3</div>
<div class="t clip" style="left:499px;width:41px;top:517.59px;letter-spacing:0.1px">2024-05-14 21:07:11</div>
<div class="a" style="left:15px;top:535.29px;width:525px;height:20.588px;background:#fff"></div>
<svg class="a" style="left:85.5px;top:540.39px" width="17.5" height="14" viewBox="0 0 17.5 14"><path d="M0.2 1.3Q0.2 0.2 1.3 0.2H5.8Q6.6 0.2 6.9 0.9L7.1 1.3H16.4Q17.3 1.3 17.3 2.2V13.8H0.2Z" fill="#ecc644"/><rect x="1.2" y="1.6" width="15.2" height="2.4" fill="#f7e07a"/><rect x="0.2" y="3.9" width="17.1" height="10" rx="0.6" fill="#e9c244"/><rect x="0.9" y="4.6" width="15.9" height="8.8" fill="url(#fg)"/><rect x="0.9" y="3.7" width="15.9" height="0.8" fill="#d8b546"/></svg>
<div class="t" style="left:108px;top:538.18px;letter-spacing:-0.295px;">bowser</div>
<div class="t r" style="left:354.5px;width:60px;top:538.18px;">8</div>
<div class="t r" style="left:431px;width:60px;top:538.18px;">0</div>
<div class="t clip" style="left:499px;width:41px;top:538.18px;letter-spacing:0.1px">2018-11-14 06:56:33</div>
<div class="a" style="left:15px;top:555.88px;width:525px;height:20.588px;background:#f7f7f7"></div>
<svg class="a" style="left:76.5px;top:561.67px" width="6" height="9" viewBox="0 0 6 9"><path d="M0.5 0.6L4.7 4.5L0.5 8.4Z" fill="#505050"/></svg>
<svg class="a" style="left:85.5px;top:560.98px" width="17.5" height="14" viewBox="0 0 17.5 14"><path d="M0.2 1.3Q0.2 0.2 1.3 0.2H5.8Q6.6 0.2 6.9 0.9L7.1 1.3H16.4Q17.3 1.3 17.3 2.2V13.8H0.2Z" fill="#ecc644"/><rect x="1.2" y="1.6" width="15.2" height="2.4" fill="#f7e07a"/><rect x="0.2" y="3.9" width="17.1" height="10" rx="0.6" fill="#e9c244"/><rect x="0.9" y="4.6" width="15.9" height="8.8" fill="url(#fg)"/><rect x="0.9" y="3.7" width="15.9" height="0.8" fill="#d8b546"/></svg>
<div class="t" style="left:108px;top:558.77px;letter-spacing:0.035px;">BrokerInfrastructure</div>
<div class="t r" style="left:354.5px;width:60px;top:558.77px;">12</div>
<div class="t r" style="left:431px;width:60px;top:558.77px;">2</div>
<div class="t clip" style="left:499px;width:41px;top:558.77px;letter-spacing:0.1px">2018-11-14 06:56:33</div>
<div class="a" style="left:15px;top:576.46px;width:525px;height:20.588px;background:#fff"></div>
<svg class="a" style="left:76.5px;top:582.26px" width="6" height="9" viewBox="0 0 6 9"><path d="M0.5 0.6L4.7 4.5L0.5 8.4Z" fill="#505050"/></svg>
<svg class="a" style="left:85.5px;top:581.56px" width="17.5" height="14" viewBox="0 0 17.5 14"><path d="M0.2 1.3Q0.2 0.2 1.3 0.2H5.8Q6.6 0.2 6.9 0.9L7.1 1.3H16.4Q17.3 1.3 17.3 2.2V13.8H0.2Z" fill="#ecc644"/><rect x="1.2" y="1.6" width="15.2" height="2.4" fill="#f7e07a"/><rect x="0.2" y="3.9" width="17.1" height="10" rx="0.6" fill="#e9c244"/><rect x="0.9" y="4.6" width="15.9" height="8.8" fill="url(#fg)"/><rect x="0.9" y="3.7" width="15.9" height="0.8" fill="#d8b546"/></svg>
<div class="t" style="left:108px;top:579.36px;letter-spacing:-0.717px;">BTAGService</div>
<div class="t r" style="left:354.5px;width:60px;top:579.36px;">11</div>
<div class="t r" style="left:431px;width:60px;top:579.36px;">2</div>
<div class="t clip" style="left:499px;width:41px;top:579.36px;letter-spacing:0.1px">2018-11-14 06:56:33</div>
<div class="a" style="left:15px;top:597.05px;width:525px;height:20.588px;background:#f7f7f7"></div>
<svg class="a" style="left:76.5px;top:602.85px" width="6" height="9" viewBox="0 0 6 9"><path d="M0.5 0.6L4.7 4.5L0.5 8.4Z" fill="#505050"/></svg>
<svg class="a" style="left:85.5px;top:602.15px" width="17.5" height="14" viewBox="0 0 17.5 14"><path d="M0.2 1.3Q0.2 0.2 1.3 0.2H5.8Q6.6 0.2 6.9 0.9L7.1 1.3H16.4Q17.3 1.3 17.3 2.2V13.8H0.2Z" fill="#ecc644"/><rect x="1.2" y="1.6" width="15.2" height="2.4" fill="#f7e07a"/><rect x="0.2" y="3.9" width="17.1" height="10" rx="0.6" fill="#e9c244"/><rect x="0.9" y="4.6" width="15.9" height="8.8" fill="url(#fg)"/><rect x="0.9" y="3.7" width="15.9" height="0.8" fill="#d8b546"/></svg>
<div class="t" style="left:108px;top:599.95px;letter-spacing:-0.182px;">BthAvctpSvc</div>
<div class="t r" style="left:354.5px;width:60px;top:599.95px;">11</div>
<div class="t r" style="left:431px;width:60px;top:599.95px;">2</div>
<div class="t clip" style="left:499px;width:41px;top:599.95px;letter-spacing:0.1px">2018-11-14 06:56:33</div>
<div class="a" style="left:15px;top:617.64px;width:525px;height:20.588px;background:#fff"></div>
<svg class="a" style="left:76.5px;top:623.43px" width="6" height="9" viewBox="0 0 6 9"><path d="M0.5 0.6L4.7 4.5L0.5 8.4Z" fill="#505050"/></svg>
<svg class="a" style="left:85.5px;top:622.74px" width="17.5" height="14" viewBox="0 0 17.5 14"><path d="M0.2 1.3Q0.2 0.2 1.3 0.2H5.8Q6.6 0.2 6.9 0.9L7.1 1.3H16.4Q17.3 1.3 17.3 2.2V13.8H0.2Z" fill="#ecc644"/><rect x="1.2" y="1.6" width="15.2" height="2.4" fill="#f7e07a"/><rect x="0.2" y="3.9" width="17.1" height="10" rx="0.6" fill="#e9c244"/><rect x="0.9" y="4.6" width="15.9" height="8.8" fill="url(#fg)"/><rect x="0.9" y="3.7" width="15.9" height="0.8" fill="#d8b546"/></svg>
<div class="t" style="left:108px;top:620.53px;letter-spacing:-0.726px;">BthEnum</div>
<div class="t r" style="left:354.5px;width:60px;top:620.53px;">7</div>
<div class="t r" style="left:431px;width:60px;top:620.53px;">1</div>
<div class="t clip" style="left:499px;width:41px;top:620.53px;letter-spacing:0.1px">2021-03-08 11:21:02</div>
<div class="a" style="left:15px;top:638.23px;width:525px;height:20.588px;background:#f7f7f7"></div>
<svg class="a" style="left:76.5px;top:644.02px" width="6" height="9" viewBox="0 0 6 9"><path d="M0.5 0.6L4.7 4.5L0.5 8.4Z" fill="#505050"/></svg>
<svg class="a" style="left:85.5px;top:643.33px" width="17.5" height="14" viewBox="0 0 17.5 14"><path d="M0.2 1.3Q0.2 0.2 1.3 0.2H5.8Q6.6 0.2 6.9 0.9L7.1 1.3H16.4Q17.3 1.3 17.3 2.2V13.8H0.2Z" fill="#ecc644"/><rect x="1.2" y="1.6" width="15.2" height="2.4" fill="#f7e07a"/><rect x="0.2" y="3.9" width="17.1" height="10" rx="0.6" fill="#e9c244"/><rect x="0.9" y="4.6" width="15.9" height="8.8" fill="url(#fg)"/><rect x="0.9" y="3.7" width="15.9" height="0.8" fill="#d8b546"/></svg>
<div class="t" style="left:108px;top:641.12px;letter-spacing:-0.854px;">BthLEEnum</div>
<div class="t r" style="left:354.5px;width:60px;top:641.12px;">7</div>
<div class="t r" style="left:431px;width:60px;top:641.12px;">1</div>
<div class="t clip" style="left:499px;width:41px;top:641.12px;letter-spacing:0.1px">2019-09-06 22:41:13</div>
<div class="a" style="left:15px;top:658.82px;width:525px;height:20.588px;background:#fff"></div>
<svg class="a" style="left:85.5px;top:663.92px" width="17.5" height="14" viewBox="0 0 17.5 14"><path d="M0.2 1.3Q0.2 0.2 1.3 0.2H5.8Q6.6 0.2 6.9 0.9L7.1 1.3H16.4Q17.3 1.3 17.3 2.2V13.8H0.2Z" fill="#ecc644"/><rect x="1.2" y="1.6" width="15.2" height="2.4" fill="#f7e07a"/><rect x="0.2" y="3.9" width="17.1" height="10" rx="0.6" fill="#e9c244"/><rect x="0.9" y="4.6" width="15.9" height="8.8" fill="url(#fg)"/><rect x="0.9" y="3.7" width="15.9" height="0.8" fill="#d8b546"/></svg>
<div class="t" style="left:108px;top:661.71px;letter-spacing:-0.568px;">BthMini</div>
<div class="t r" style="left:354.5px;width:60px;top:661.71px;">8</div>
<div class="t r" style="left:431px;width:60px;top:661.71px;">0</div>
<div class="t clip" style="left:499px;width:41px;top:661.71px;letter-spacing:0.1px">2021-01-08 11:21:02</div>
<div class="a" style="left:15px;top:679.40px;width:525px;height:20.588px;background:#f7f7f7"></div>
<svg class="a" style="left:76.5px;top:685.20px" width="6" height="9" viewBox="0 0 6 9"><path d="M0.5 0.6L4.7 4.5L0.5 8.4Z" fill="#505050"/></svg>
<svg class="a" style="left:85.5px;top:684.5px" width="17.5" height="14" viewBox="0 0 17.5 14"><path d="M0.2 1.3Q0.2 0.2 1.3 0.2H5.8Q6.6 0.2 6.9 0.9L7.1 1.3H16.4Q17.3 1.3 17.3 2.2V13.8H0.2Z" fill="#ecc644"/><rect x="1.2" y="1.6" width="15.2" height="2.4" fill="#f7e07a"/><rect x="0.2" y="3.9" width="17.1" height="10" rx="0.6" fill="#e9c244"/><rect x="0.9" y="4.6" width="15.9" height="8.8" fill="url(#fg)"/><rect x="0.9" y="3.7" width="15.9" height="0.8" fill="#d8b546"/></svg>
<div class="t" style="left:108px;top:682.30px;letter-spacing:-1.305px;">BTHPORT</div>
<div class="t r" style="left:354.5px;width:60px;top:682.30px;">8</div>
<div class="t r" style="left:431px;width:60px;top:682.30px;">1</div>
<div class="t clip" style="left:499px;width:41px;top:682.30px;letter-spacing:0.1px">2021-01-08 11:21:02</div>
<div class="a" style="left:15px;top:699.99px;width:525px;height:20.588px;background:#fff"></div>
<svg class="a" style="left:76.5px;top:705.79px" width="6" height="9" viewBox="0 0 6 9"><path d="M0.5 0.6L4.7 4.5L0.5 8.4Z" fill="#505050"/></svg>
<svg class="a" style="left:85.5px;top:705.09px" width="17.5" height="14" viewBox="0 0 17.5 14"><path d="M0.2 1.3Q0.2 0.2 1.3 0.2H5.8Q6.6 0.2 6.9 0.9L7.1 1.3H16.4Q17.3 1.3 17.3 2.2V13.8H0.2Z" fill="#ecc644"/><rect x="1.2" y="1.6" width="15.2" height="2.4" fill="#f7e07a"/><rect x="0.2" y="3.9" width="17.1" height="10" rx="0.6" fill="#e9c244"/><rect x="0.9" y="4.6" width="15.9" height="8.8" fill="url(#fg)"/><rect x="0.9" y="3.7" width="15.9" height="0.8" fill="#d8b546"/></svg>
<div class="t" style="left:108px;top:702.89px;letter-spacing:-0.025px;">bthserv</div>
<div class="t r" style="left:354.5px;width:60px;top:702.89px;">10</div>
<div class="t r" style="left:431px;width:60px;top:702.89px;">2</div>
<div class="t clip" style="left:499px;width:41px;top:702.89px;letter-spacing:0.1px">2018-11-14 06:56:33</div>
<div class="a" style="left:103.3px;top:20.5px;width:436.7px;height:1px;background:#d8d8d8"></div>
<div class="a" style="left:103.3px;top:0.00px;width:1px;height:20.588px;background:#d8d8d8"></div>
<div class="a" style="left:351px;top:0.00px;width:1px;height:20.588px;background:#d8d8d8"></div>
<div class="a" style="left:418px;top:0.00px;width:1px;height:20.588px;background:#d8d8d8"></div>
<div class="a" style="left:494px;top:0.00px;width:1px;height:20.588px;background:#d8d8d8"></div>
<div class="a" style="left:103.3px;top:40.5px;width:436.7px;height:1px;background:#d8d8d8"></div>
<div class="a" style="left:103.3px;top:20.59px;width:1px;height:20.588px;background:#d8d8d8"></div>
<div class="a" style="left:351px;top:20.59px;width:1px;height:20.588px;background:#d8d8d8"></div>
<div class="a" style="left:418px;top:20.59px;width:1px;height:20.588px;background:#d8d8d8"></div>
<div class="a" style="left:494px;top:20.59px;width:1px;height:20.588px;background:#d8d8d8"></div>
<div class="a" style="left:103.3px;top:61.5px;width:436.7px;height:1px;background:#d8d8d8"></div>
<div class="a" style="left:103.3px;top:41.18px;width:1px;height:20.588px;background:#d8d8d8"></div>
<div class="a" style="left:351px;top:41.18px;width:1px;height:20.588px;background:#d8d8d8"></div>
<div class="a" style="left:418px;top:41.18px;width:1px;height:20.588px;background:#d8d8d8"></div>
<div class="a" style="left:494px;top:41.18px;width:1px;height:20.588px;background:#d8d8d8"></div>
<div class="a" style="left:103.3px;top:81.5px;width:436.7px;height:1px;background:#d8d8d8"></div>
<div class="a" style="left:103.3px;top:61.76px;width:1px;height:20.588px;background:#d8d8d8"></div>
<div class="a" style="left:351px;top:61.76px;width:1px;height:20.588px;background:#d8d8d8"></div>
<div class="a" style="left:418px;top:61.76px;width:1px;height:20.588px;background:#d8d8d8"></div>
<div class="a" style="left:494px;top:61.76px;width:1px;height:20.588px;background:#d8d8d8"></div>
<div class="a" style="left:103.3px;top:102.5px;width:436.7px;height:1px;background:#d8d8d8"></div>
<div class="a" style="left:103.3px;top:82.35px;width:1px;height:20.588px;background:#d8d8d8"></div>
<div class="a" style="left:351px;top:82.35px;width:1px;height:20.588px;background:#d8d8d8"></div>
<div class="a" style="left:418px;top:82.35px;width:1px;height:20.588px;background:#d8d8d8"></div>
<div class="a" style="left:494px;top:82.35px;width:1px;height:20.588px;background:#d8d8d8"></div>
<div class="a" style="left:103.3px;top:123.5px;width:436.7px;height:1px;background:#d8d8d8"></div>
<div class="a" style="left:103.3px;top:102.94px;width:1px;height:20.588px;background:#d8d8d8"></div>
<div class="a" style="left:351px;top:102.94px;width:1px;height:20.588px;background:#d8d8d8"></div>
<div class="a" style="left:418px;top:102.94px;width:1px;height:20.588px;background:#d8d8d8"></div>
<div class="a" style="left:494px;top:102.94px;width:1px;height:20.588px;background:#d8d8d8"></div>
<div class="a" style="left:103.3px;top:143.5px;width:436.7px;height:1px;background:#d8d8d8"></div>
<div class="a" style="left:103.3px;top:123.53px;width:1px;height:20.588px;background:#d8d8d8"></div>
<div class="a" style="left:351px;top:123.53px;width:1px;height:20.588px;background:#d8d8d8"></div>
<div class="a" style="left:418px;top:123.53px;width:1px;height:20.588px;background:#d8d8d8"></div>
<div class="a" style="left:494px;top:123.53px;width:1px;height:20.588px;background:#d8d8d8"></div>
<div class="a" style="left:103.3px;top:164.5px;width:436.7px;height:1px;background:#d8d8d8"></div>
<div class="a" style="left:103.3px;top:144.12px;width:1px;height:20.588px;background:#d8d8d8"></div>
<div class="a" style="left:351px;top:144.12px;width:1px;height:20.588px;background:#d8d8d8"></div>
<div class="a" style="left:418px;top:144.12px;width:1px;height:20.588px;background:#d8d8d8"></div>
<div class="a" style="left:494px;top:144.12px;width:1px;height:20.588px;background:#d8d8d8"></div>
<div class="a" style="left:103.3px;top:184.5px;width:436.7px;height:1px;background:#d8d8d8"></div>
<div class="a" style="left:103.3px;top:164.70px;width:1px;height:20.588px;background:#d8d8d8"></div>
<div class="a" style="left:351px;top:164.70px;width:1px;height:20.588px;background:#d8d8d8"></div>
<div class="a" style="left:418px;top:164.70px;width:1px;height:20.588px;background:#d8d8d8"></div>
<div class="a" style="left:494px;top:164.70px;width:1px;height:20.588px;background:#d8d8d8"></div>
<div class="a" style="left:117.3px;top:205.5px;width:422.7px;height:1px;background:#d8d8d8"></div>
<div class="a" style="left:117.3px;top:185.29px;width:1px;height:20.588px;background:#d8d8d8"></div>
<div class="a" style="left:351px;top:185.29px;width:1px;height:20.588px;background:#d8d8d8"></div>
<div class="a" style="left:418px;top:185.29px;width:1px;height:20.588px;background:#d8d8d8"></div>
<div class="a" style="left:494px;top:185.29px;width:1px;height:20.588px;background:#d8d8d8"></div>
<div class="a" style="left:131.3px;top:225.5px;width:408.7px;height:1px;background:#d8d8d8"></div>
<div class="a" style="left:131.3px;top:205.88px;width:1px;height:20.588px;background:#d8d8d8"></div>
<div class="a" style="left:351px;top:205.88px;width:1px;height:20.588px;background:#d8d8d8"></div>
<div class="a" style="left:418px;top:205.88px;width:1px;height:20.588px;background:#d8d8d8"></div>
<div class="a" style="left:494px;top:205.88px;width:1px;height:20.588px;background:#d8d8d8"></div>
<div class="a" style="left:145.3px;top:246.5px;width:394.7px;height:1px;background:#d8d8d8"></div>
<div class="a" style="left:145.3px;top:226.47px;width:1px;height:20.588px;background:#d8d8d8"></div>
<div class="a" style="left:351px;top:226.47px;width:1px;height:20.588px;background:#d8d8d8"></div>
<div class="a" style="left:418px;top:226.47px;width:1px;height:20.588px;background:#d8d8d8"></div>
<div class="a" style="left:494px;top:226.47px;width:1px;height:20.588px;background:#d8d8d8"></div>
<div class="a" style="left:145.3px;top:267.5px;width:394.7px;height:1px;background:#d8d8d8"></div>
<div class="a" style="left:145.3px;top:247.06px;width:1px;height:20.588px;background:#d8d8d8"></div>
<div class="a" style="left:351px;top:247.06px;width:1px;height:20.588px;background:#d8d8d8"></div>
<div class="a" style="left:418px;top:247.06px;width:1px;height:20.588px;background:#d8d8d8"></div>
<div class="a" style="left:494px;top:247.06px;width:1px;height:20.588px;background:#d8d8d8"></div>
<div class="a" style="left:145.3px;top:287.5px;width:394.7px;height:1px;background:#d8d8d8"></div>
<div class="a" style="left:145.3px;top:267.64px;width:1px;height:20.588px;background:#d8d8d8"></div>
<div class="a" style="left:351px;top:267.64px;width:1px;height:20.588px;background:#d8d8d8"></div>
<div class="a" style="left:418px;top:267.64px;width:1px;height:20.588px;background:#d8d8d8"></div>
<div class="a" style="left:494px;top:267.64px;width:1px;height:20.588px;background:#d8d8d8"></div>
<div class="a" style="left:145.3px;top:308.5px;width:394.7px;height:1px;background:#d8d8d8"></div>
<div class="a" style="left:145.3px;top:288.23px;width:1px;height:20.588px;background:#d8d8d8"></div>
<div class="a" style="left:351px;top:288.23px;width:1px;height:20.588px;background:#d8d8d8"></div>
<div class="a" style="left:418px;top:288.23px;width:1px;height:20.588px;background:#d8d8d8"></div>
<div class="a" style="left:494px;top:288.23px;width:1px;height:20.588px;background:#d8d8d8"></div>
<div class="a" style="left:145.3px;top:328.5px;width:394.7px;height:1px;background:#d8d8d8"></div>
<div class="a" style="left:145.3px;top:308.82px;width:1px;height:20.588px;background:#d8d8d8"></div>
<div class="a" style="left:351px;top:308.82px;width:1px;height:20.588px;background:#d8d8d8"></div>
<div class="a" style="left:418px;top:308.82px;width:1px;height:20.588px;background:#d8d8d8"></div>
<div class="a" style="left:494px;top:308.82px;width:1px;height:20.588px;background:#d8d8d8"></div>
<div class="a" style="left:103.3px;top:349.5px;width:436.7px;height:1px;background:#d8d8d8"></div>
<div class="a" style="left:103.3px;top:329.41px;width:1px;height:20.588px;background:#d8d8d8"></div>
<div class="a" style="left:351px;top:329.41px;width:1px;height:20.588px;background:#d8d8d8"></div>
<div class="a" style="left:418px;top:329.41px;width:1px;height:20.588px;background:#d8d8d8"></div>
<div class="a" style="left:494px;top:329.41px;width:1px;height:20.588px;background:#d8d8d8"></div>
<div class="a" style="left:103.3px;top:370.5px;width:436.7px;height:1px;background:#d8d8d8"></div>
<div class="a" style="left:103.3px;top:350.00px;width:1px;height:20.588px;background:#d8d8d8"></div>
<div class="a" style="left:351px;top:350.00px;width:1px;height:20.588px;background:#d8d8d8"></div>
<div class="a" style="left:418px;top:350.00px;width:1px;height:20.588px;background:#d8d8d8"></div>
<div class="a" style="left:494px;top:350.00px;width:1px;height:20.588px;background:#d8d8d8"></div>
<div class="a" style="left:103.3px;top:390.5px;width:436.7px;height:1px;background:#d8d8d8"></div>
<div class="a" style="left:103.3px;top:370.58px;width:1px;height:20.588px;background:#d8d8d8"></div>
<div class="a" style="left:351px;top:370.58px;width:1px;height:20.588px;background:#d8d8d8"></div>
<div class="a" style="left:418px;top:370.58px;width:1px;height:20.588px;background:#d8d8d8"></div>
<div class="a" style="left:494px;top:370.58px;width:1px;height:20.588px;background:#d8d8d8"></div>
<div class="a" style="left:103.3px;top:411.5px;width:436.7px;height:1px;background:#d8d8d8"></div>
<div class="a" style="left:103.3px;top:391.17px;width:1px;height:20.588px;background:#d8d8d8"></div>
<div class="a" style="left:351px;top:391.17px;width:1px;height:20.588px;background:#d8d8d8"></div>
<div class="a" style="left:418px;top:391.17px;width:1px;height:20.588px;background:#d8d8d8"></div>
<div class="a" style="left:494px;top:391.17px;width:1px;height:20.588px;background:#d8d8d8"></div>
<div class="a" style="left:103.3px;top:431.5px;width:436.7px;height:1px;background:#d8d8d8"></div>
<div class="a" style="left:103.3px;top:411.76px;width:1px;height:20.588px;background:#d8d8d8"></div>
<div class="a" style="left:351px;top:411.76px;width:1px;height:20.588px;background:#d8d8d8"></div>
<div class="a" style="left:418px;top:411.76px;width:1px;height:20.588px;background:#d8d8d8"></div>
<div class="a" style="left:494px;top:411.76px;width:1px;height:20.588px;background:#d8d8d8"></div>
<div class="a" style="left:103.3px;top:452.5px;width:436.7px;height:1px;background:#d8d8d8"></div>
<div class="a" style="left:103.3px;top:432.35px;width:1px;height:20.588px;background:#d8d8d8"></div>
<div class="a" style="left:351px;top:432.35px;width:1px;height:20.588px;background:#d8d8d8"></div>
<div class="a" style="left:418px;top:432.35px;width:1px;height:20.588px;background:#d8d8d8"></div>
<div class="a" style="left:494px;top:432.35px;width:1px;height:20.588px;background:#d8d8d8"></div>
<div class="a" style="left:103.3px;top:473.5px;width:436.7px;height:1px;background:#d8d8d8"></div>
<div class="a" style="left:103.3px;top:452.94px;width:1px;height:20.588px;background:#d8d8d8"></div>
<div class="a" style="left:351px;top:452.94px;width:1px;height:20.588px;background:#d8d8d8"></div>
<div class="a" style="left:418px;top:452.94px;width:1px;height:20.588px;background:#d8d8d8"></div>
<div class="a" style="left:494px;top:452.94px;width:1px;height:20.588px;background:#d8d8d8"></div>
<div class="a" style="left:103.3px;top:493.5px;width:436.7px;height:1px;background:#d8d8d8"></div>
<div class="a" style="left:103.3px;top:473.52px;width:1px;height:20.588px;background:#d8d8d8"></div>
<div class="a" style="left:351px;top:473.52px;width:1px;height:20.588px;background:#d8d8d8"></div>
<div class="a" style="left:418px;top:473.52px;width:1px;height:20.588px;background:#d8d8d8"></div>
<div class="a" style="left:494px;top:473.52px;width:1px;height:20.588px;background:#d8d8d8"></div>
<div class="a" style="left:103.3px;top:514.5px;width:436.7px;height:1px;background:#d8d8d8"></div>
<div class="a" style="left:103.3px;top:494.11px;width:1px;height:20.588px;background:#d8d8d8"></div>
<div class="a" style="left:351px;top:494.11px;width:1px;height:20.588px;background:#d8d8d8"></div>
<div class="a" style="left:418px;top:494.11px;width:1px;height:20.588px;background:#d8d8d8"></div>
<div class="a" style="left:494px;top:494.11px;width:1px;height:20.588px;background:#d8d8d8"></div>
<div class="a" style="left:103.3px;top:534.5px;width:436.7px;height:1px;background:#d8d8d8"></div>
<div class="a" style="left:103.3px;top:514.70px;width:1px;height:20.588px;background:#d8d8d8"></div>
<div class="a" style="left:351px;top:514.70px;width:1px;height:20.588px;background:#d8d8d8"></div>
<div class="a" style="left:418px;top:514.70px;width:1px;height:20.588px;background:#d8d8d8"></div>
<div class="a" style="left:494px;top:514.70px;width:1px;height:20.588px;background:#d8d8d8"></div>
<div class="a" style="left:103.3px;top:555.5px;width:436.7px;height:1px;background:#d8d8d8"></div>
<div class="a" style="left:103.3px;top:535.29px;width:1px;height:20.588px;background:#d8d8d8"></div>
<div class="a" style="left:351px;top:535.29px;width:1px;height:20.588px;background:#d8d8d8"></div>
<div class="a" style="left:418px;top:535.29px;width:1px;height:20.588px;background:#d8d8d8"></div>
<div class="a" style="left:494px;top:535.29px;width:1px;height:20.588px;background:#d8d8d8"></div>
<div class="a" style="left:103.3px;top:575.5px;width:436.7px;height:1px;background:#d8d8d8"></div>
<div class="a" style="left:103.3px;top:555.88px;width:1px;height:20.588px;background:#d8d8d8"></div>
<div class="a" style="left:351px;top:555.88px;width:1px;height:20.588px;background:#d8d8d8"></div>
<div class="a" style="left:418px;top:555.88px;width:1px;height:20.588px;background:#d8d8d8"></div>
<div class="a" style="left:494px;top:555.88px;width:1px;height:20.588px;background:#d8d8d8"></div>
<div class="a" style="left:103.3px;top:596.5px;width:436.7px;height:1px;background:#d8d8d8"></div>
<div class="a" style="left:103.3px;top:576.46px;width:1px;height:20.588px;background:#d8d8d8"></div>
<div class="a" style="left:351px;top:576.46px;width:1px;height:20.588px;background:#d8d8d8"></div>
<div class="a" style="left:418px;top:576.46px;width:1px;height:20.588px;background:#d8d8d8"></div>
<div class="a" style="left:494px;top:576.46px;width:1px;height:20.588px;background:#d8d8d8"></div>
<div class="a" style="left:103.3px;top:617.5px;width:436.7px;height:1px;background:#d8d8d8"></div>
<div class="a" style="left:103.3px;top:597.05px;width:1px;height:20.588px;background:#d8d8d8"></div>
<div class="a" style="left:351px;top:597.05px;width:1px;height:20.588px;background:#d8d8d8"></div>
<div class="a" style="left:418px;top:597.05px;width:1px;height:20.588px;background:#d8d8d8"></div>
<div class="a" style="left:494px;top:597.05px;width:1px;height:20.588px;background:#d8d8d8"></div>
<div class="a" style="left:103.3px;top:637.5px;width:436.7px;height:1px;background:#d8d8d8"></div>
<div class="a" style="left:103.3px;top:617.64px;width:1px;height:20.588px;background:#d8d8d8"></div>
<div class="a" style="left:351px;top:617.64px;width:1px;height:20.588px;background:#d8d8d8"></div>
<div class="a" style="left:418px;top:617.64px;width:1px;height:20.588px;background:#d8d8d8"></div>
<div class="a" style="left:494px;top:617.64px;width:1px;height:20.588px;background:#d8d8d8"></div>
<div class="a" style="left:103.3px;top:658.5px;width:436.7px;height:1px;background:#d8d8d8"></div>
<div class="a" style="left:103.3px;top:638.23px;width:1px;height:20.588px;background:#d8d8d8"></div>
<div class="a" style="left:351px;top:638.23px;width:1px;height:20.588px;background:#d8d8d8"></div>
<div class="a" style="left:418px;top:638.23px;width:1px;height:20.588px;background:#d8d8d8"></div>
<div class="a" style="left:494px;top:638.23px;width:1px;height:20.588px;background:#d8d8d8"></div>
<div class="a" style="left:103.3px;top:678.5px;width:436.7px;height:1px;background:#d8d8d8"></div>
<div class="a" style="left:103.3px;top:658.82px;width:1px;height:20.588px;background:#d8d8d8"></div>
<div class="a" style="left:351px;top:658.82px;width:1px;height:20.588px;background:#d8d8d8"></div>
<div class="a" style="left:418px;top:658.82px;width:1px;height:20.588px;background:#d8d8d8"></div>
<div class="a" style="left:494px;top:658.82px;width:1px;height:20.588px;background:#d8d8d8"></div>
<div class="a" style="left:103.3px;top:699.5px;width:436.7px;height:1px;background:#d8d8d8"></div>
<div class="a" style="left:103.3px;top:679.40px;width:1px;height:20.588px;background:#d8d8d8"></div>
<div class="a" style="left:351px;top:679.40px;width:1px;height:20.588px;background:#d8d8d8"></div>
<div class="a" style="left:418px;top:679.40px;width:1px;height:20.588px;background:#d8d8d8"></div>
<div class="a" style="left:494px;top:679.40px;width:1px;height:20.588px;background:#d8d8d8"></div>
<div class="a" style="left:103.3px;top:720.5px;width:436.7px;height:1px;background:#d8d8d8"></div>
<div class="a" style="left:103.3px;top:699.99px;width:1px;height:20.588px;background:#d8d8d8"></div>
<div class="a" style="left:351px;top:699.99px;width:1px;height:20.588px;background:#d8d8d8"></div>
<div class="a" style="left:418px;top:699.99px;width:1px;height:20.588px;background:#d8d8d8"></div>
<div class="a" style="left:494px;top:699.99px;width:1px;height:20.588px;background:#d8d8d8"></div>
</div>
<div class="a" style="left:14.5px;top:170px;width:1px;height:715px;background:#b4b4b4"></div>
<div class="a" style="left:539px;top:149.5px;width:18px;height:735.5px;background:#f1f2f1"></div>
<div class="a" style="left:539px;top:232.5px;width:18px;height:34px;background:#d2d4d3"></div>
<svg class="a" style="left:543px;top:154.3px" width="10" height="7" viewBox="0 0 10 7"><path d="M1.2 6L5 1.7L8.8 6" fill="none" stroke="#505050" stroke-width="1.6"/></svg>
<svg class="a" style="left:543px;top:872.5px" width="10" height="7" viewBox="0 0 10 7"><path d="M1.2 1L5 5.3L8.8 1" fill="none" stroke="#505050" stroke-width="1.6"/></svg>
<div class="a" style="left:2px;top:885px;width:555px;height:17.5px;background:#f1f2f1"></div>
<div class="a" style="left:13.5px;top:885px;width:436px;height:17.5px;background:#cfd1d0"></div>
<svg class="a" style="left:0.8px;top:889.2px" width="7" height="10" viewBox="0 0 7 10"><path d="M5.8 1.3L1.5 5L5.8 8.7" fill="none" stroke="#555" stroke-width="1.3"/></svg>
<svg class="a" style="left:526.5px;top:889.2px" width="7" height="10" viewBox="0 0 7 10"><path d="M1.2 1.3L5.5 5L1.2 8.7" fill="none" stroke="#555" stroke-width="1.3"/></svg>
<div class="a" style="left:564.6px;top:470.5px;width:2px;height:2px;background:#5e5e5e"></div>
<div class="a" style="left:564.6px;top:474.85px;width:2px;height:2px;background:#5e5e5e"></div>
<div class="a" style="left:564.6px;top:479.2px;width:2px;height:2px;background:#5e5e5e"></div>
<div class="a" style="left:564.6px;top:483.55px;width:2px;height:2px;background:#5e5e5e"></div>
<div class="a" style="left:572px;top:78px;width:1295px;height:1.8px;background:#a8a8a8"></div>
<div class="a" style="left:572px;top:54px;width:59px;height:25px;border:1px solid #c8c8c8;border-bottom:none;background:#f8f8f8"></div>
<div class="t" style="left:585px;top:58.40px;letter-spacing:-0.734px;">Values</div>
<div class="t" style="left:642px;top:58.40px;letter-spacing:-1.121px;">BamDam</div>
<div class="a" style="left:572px;top:78px;width:2px;height:439px;background:#a8a8a8"></div>
<div class="a" style="left:572px;top:515px;width:1295px;height:1.9px;background:#a8a8a8"></div>
<div class="a" style="left:574.8px;top:80px;width:1293px;height:435px;background:#fff"></div>
<div class="a" style="left:574.8px;top:80px;width:1293px;height:34px;background:#f7f7f7"></div>
<div class="t" style="left:579.5px;top:89.90px;letter-spacing:-0.131px;color:#b8b8b8">Drag a column header here to group by that column</div>
<div class="a" style="left:574.8px;top:114px;width:1293px;height:22px;background:#f7f7f7"></div>
<div class="a" style="left:574.8px;top:137px;width:19.2px;height:340px;background:#f7f7f7"></div>
<div class="a" style="left:574.8px;top:113.7px;width:1293px;height:1px;background:#b4b4b4"></div>
<div class="a" style="left:574.8px;top:135.2px;width:1293px;height:1.2px;background:#adadad"></div>
<div class="a" style="left:574.8px;top:158px;width:1293px;height:1px;background:#9e9e9e"></div>
<div class="a" style="left:594px;top:114px;width:1px;height:22px;background:#b4b4b4"></div>
<div class="a" style="left:594px;top:136px;width:1px;height:23px;background:#b4b4b4"></div>
<div class="a" style="left:1321px;top:114px;width:1px;height:22px;background:#b4b4b4"></div>
<div class="a" style="left:1321px;top:136px;width:1px;height:23px;background:#cdcdcd"></div>
<div class="a" style="left:1400px;top:114px;width:1px;height:22px;background:#b4b4b4"></div>
<div class="a" style="left:1400px;top:136px;width:1px;height:23px;background:#cdcdcd"></div>
<div class="a" style="left:1522.5px;top:114px;width:1px;height:22px;background:#b4b4b4"></div>
<div class="a" style="left:1522.5px;top:136px;width:1px;height:23px;background:#cdcdcd"></div>
<div class="a" style="left:1645px;top:114px;width:1px;height:22px;background:#b4b4b4"></div>
<div class="a" style="left:1645px;top:136px;width:1px;height:23px;background:#cdcdcd"></div>
<div class="a" style="left:1767px;top:114px;width:1px;height:22px;background:#b4b4b4"></div>
<div class="a" style="left:1767px;top:136px;width:1px;height:23px;background:#cdcdcd"></div>
<div class="t" style="left:598.6px;top:117.40px;letter-spacing:-0.623px;">Value Name</div>
<div class="t" style="left:1325.7px;top:117.40px;letter-spacing:-0.374px;">Value Type</div>
<div class="t" style="left:1404.7px;top:117.40px;letter-spacing:-0.215px;">Data</div>
<div class="t" style="left:1527.2px;top:117.40px;letter-spacing:-0.555px;">Value Slack</div>
<div class="t" style="left:1649.8px;top:117.40px;letter-spacing:-0.092px;">Is Deleted</div>
<div class="t" style="left:1772px;top:117.40px;letter-spacing:-0.252px">Data Record Reallocated</div>
<svg class="a" style="left:581.9px;top:144px" width="5.4" height="8" viewBox="0 0 5.4 8"><path d="M0.2 1.9Q0.2 0.2 2.7 0.2Q5.2 0.2 5.2 1.9Q5.2 3.2 3.3 4.6V7.8H2.1V4.6Q0.2 3.2 0.2 1.9Z" fill="#555"/><ellipse cx="2.7" cy="1.5" rx="1.5" ry="0.7" fill="#a5a5a5"/></svg>
<div class="a" style="left:600px;top:142px;height:12px;line-height:12px;font-size:8.3px;font-weight:bold;color:#7a7a7a"><span style="display:inline-block;transform:scaleX(.72);transform-origin:0 50%;width:4.5px">A</span><span style="display:inline-block;width:7.6px;height:11.7px;background:#5ea88f;color:#e6f5ef;vertical-align:top"><span style="display:inline-block;transform:scaleX(.72);transform-origin:0 50%;margin-left:1.7px">B</span></span><span style="display:inline-block;transform:scaleX(.72);transform-origin:0 50%;width:5px;margin-left:0.9px;color:#8a7474">C</span></div>
<div class="a" style="left:1326.5px;top:142px;height:12px;line-height:12px;font-size:8.3px;font-weight:bold;color:#7a7a7a"><span style="display:inline-block;transform:scaleX(.72);transform-origin:0 50%;width:4.5px">A</span><span style="display:inline-block;width:7.6px;height:11.7px;background:#5ea88f;color:#e6f5ef;vertical-align:top"><span style="display:inline-block;transform:scaleX(.72);transform-origin:0 50%;margin-left:1.7px">B</span></span><span style="display:inline-block;transform:scaleX(.72);transform-origin:0 50%;width:5px;margin-left:0.9px;color:#8a7474">C</span></div>
<div class="a" style="left:1405.5px;top:142px;height:12px;line-height:12px;font-size:8.3px;font-weight:bold;color:#7a7a7a"><span style="display:inline-block;transform:scaleX(.72);transform-origin:0 50%;width:4.5px">A</span><span style="display:inline-block;width:7.6px;height:11.7px;background:#5ea88f;color:#e6f5ef;vertical-align:top"><span style="display:inline-block;transform:scaleX(.72);transform-origin:0 50%;margin-left:1.7px">B</span></span><span style="display:inline-block;transform:scaleX(.72);transform-origin:0 50%;width:5px;margin-left:0.9px;color:#8a7474">C</span></div>
<div class="a" style="left:1528px;top:142px;height:12px;line-height:12px;font-size:8.3px;font-weight:bold;color:#7a7a7a"><span style="display:inline-block;transform:scaleX(.72);transform-origin:0 50%;width:4.5px">A</span><span style="display:inline-block;width:7.6px;height:11.7px;background:#5ea88f;color:#e6f5ef;vertical-align:top"><span style="display:inline-block;transform:scaleX(.72);transform-origin:0 50%;margin-left:1.7px">B</span></span><span style="display:inline-block;transform:scaleX(.72);transform-origin:0 50%;width:5px;margin-left:0.9px;color:#8a7474">C</span></div>
<div class="a" style="left:1700px;top:140.2px;width:13.5px;height:13.5px;border:1px solid #bcbcbc;background:#fff"><div class="a" style="left:2.2px;top:2.2px;width:7.2px;height:7.2px;background:#5c5c5c"></div></div>
<div class="a" style="left:1835.7px;top:140.2px;width:13.5px;height:13.5px;border:1px solid #bcbcbc;background:#fff"><div class="a" style="left:2.2px;top:2.2px;width:7.2px;height:7.2px;background:#5c5c5c"></div></div>
<div class="a" style="left:594.5px;top:158.60px;width:1273px;height:22.77px;background:#f7f7f7"></div>
<div class="t" style="left:598.6px;top:162.58px;letter-spacing:-0.528px;">Version</div>
<div class="t" style="left:1325.7px;top:162.58px;letter-spacing:-0.397px;">RegDword</div>
<div class="t" style="left:1405.5px;top:162.58px;">1</div>
<div class="a" style="left:1700px;top:162.88px;width:13.5px;height:13.5px;border:1px solid #bcbcbc;background:#fff"></div>
<div class="a" style="left:1835.7px;top:162.88px;width:13.5px;height:13.5px;border:1px solid #bcbcbc;background:#fff"></div>
<div class="a" style="left:594.5px;top:181.37px;width:1273px;height:22.77px;background:#fff"></div>
<div class="t" style="left:598.6px;top:185.35px;letter-spacing:-0.135px;">Microsoft.Windows.ShellExperienceHost_cw5n1h2txyewy</div>
<div class="t" style="left:1325.7px;top:185.35px;letter-spacing:-0.427px;">RegBinary</div>
<div class="t" style="left:1404.7px;top:185.35px;letter-spacing:-0.172px;">6F-09-B6-2C-41-A6...</div>
<div class="t" style="left:1527.2px;top:185.35px;letter-spacing:-0.036px;">00-00-00-00</div>
<div class="a" style="left:1700px;top:185.65px;width:13.5px;height:13.5px;border:1px solid #bcbcbc;background:#fff"></div>
<div class="a" style="left:1835.7px;top:185.65px;width:13.5px;height:13.5px;border:1px solid #bcbcbc;background:#fff"></div>
<div class="a" style="left:594.5px;top:204.14px;width:1273px;height:22.77px;background:#f7f7f7"></div>
<div class="t" style="left:598.6px;top:208.12px;letter-spacing:-0.485px;">SequenceNumber</div>
<div class="t" style="left:1325.7px;top:208.12px;letter-spacing:-0.397px;">RegDword</div>
<div class="t" style="left:1404.7px;top:208.12px;letter-spacing:0.256px;">31</div>
<div class="a" style="left:1700px;top:208.42px;width:13.5px;height:13.5px;border:1px solid #bcbcbc;background:#fff"></div>
<div class="a" style="left:1835.7px;top:208.42px;width:13.5px;height:13.5px;border:1px solid #bcbcbc;background:#fff"></div>
<div class="a" style="left:594.5px;top:226.91px;width:1273px;height:22.77px;background:#fff"></div>
<div class="t" style="left:598.6px;top:230.89px;letter-spacing:-0.028px;">Microsoft.Windows.Cortana_cw5n1h2txyewy</div>
<div class="t" style="left:1325.7px;top:230.89px;letter-spacing:-0.427px;">RegBinary</div>
<div class="t" style="left:1404.7px;top:230.89px;letter-spacing:-0.207px;">C9-AA-64-02-42-A6...</div>
<div class="t" style="left:1527.2px;top:230.89px;letter-spacing:-0.036px;">00-00-00-00</div>
<div class="a" style="left:1700px;top:231.19px;width:13.5px;height:13.5px;border:1px solid #bcbcbc;background:#fff"></div>
<div class="a" style="left:1835.7px;top:231.19px;width:13.5px;height:13.5px;border:1px solid #bcbcbc;background:#fff"></div>
<div class="a" style="left:594.5px;top:249.68px;width:1273px;height:22.77px;background:#f7f7f7"></div>
<div class="t" style="left:599.4px;top:253.66px;letter-spacing:-0.112px;">\Device\HarddiskVolume1\Program Files (x86)\Internet Explorer\iexplore.exe</div>
<div class="t" style="left:1325.7px;top:253.66px;letter-spacing:-0.427px;">RegBinary</div>
<div class="t" style="left:1404.7px;top:253.66px;letter-spacing:-0.397px;">44-6F-38-EE-1E-9B-...</div>
<div class="t" style="left:1527.2px;top:253.66px;letter-spacing:-0.036px;">00-00-00-00</div>
<div class="a" style="left:1700px;top:253.96px;width:13.5px;height:13.5px;border:1px solid #bcbcbc;background:#fff"></div>
<div class="a" style="left:1835.7px;top:253.96px;width:13.5px;height:13.5px;border:1px solid #bcbcbc;background:#fff"></div>
<div class="a" style="left:594.5px;top:272.45px;width:1273px;height:22.77px;background:#fff"></div>
<div class="t" style="left:599.4px;top:276.43px;letter-spacing:-0.155px;">\Device\HarddiskVolume1\Windows\explorer.exe</div>
<div class="t" style="left:1325.7px;top:276.43px;letter-spacing:-0.427px;">RegBinary</div>
<div class="t" style="left:1404.7px;top:276.43px;letter-spacing:-0.277px;">EF-0D-59-2C-41-A6...</div>
<div class="t" style="left:1527.2px;top:276.43px;letter-spacing:-0.170px;">76-6B-01-00</div>
<div class="a" style="left:1700px;top:276.73px;width:13.5px;height:13.5px;border:1px solid #bcbcbc;background:#fff"></div>
<div class="a" style="left:1835.7px;top:276.73px;width:13.5px;height:13.5px;border:1px solid #bcbcbc;background:#fff"></div>
<div class="a" style="left:594.5px;top:295.22px;width:1273px;height:22.77px;background:#f7f7f7"></div>
<div class="t" style="left:599.4px;top:299.20px;letter-spacing:-0.224px;">\Device\HarddiskVolume1\Windows\System32\cmd.exe</div>
<div class="t" style="left:1325.7px;top:299.20px;letter-spacing:-0.427px;">RegBinary</div>
<div class="t" style="left:1404.7px;top:299.20px;letter-spacing:-0.277px;">A3-A8-7C-E2-45-A6...</div>
<div class="t" style="left:1527.2px;top:299.20px;letter-spacing:-0.236px;">A0-4F-06-01</div>
<div class="a" style="left:1700px;top:299.5px;width:13.5px;height:13.5px;border:1px solid #bcbcbc;background:#fff"></div>
<div class="a" style="left:1835.7px;top:299.5px;width:13.5px;height:13.5px;border:1px solid #bcbcbc;background:#fff"></div>
<div class="a" style="left:594.5px;top:317.99px;width:1273px;height:22.77px;background:#fff"></div>
<div class="t" style="left:599.4px;top:321.97px;letter-spacing:-0.178px;">\Device\HarddiskVolume1\Program Files (x86)\Microsoft\Edge\Application\msedge.exe</div>
<div class="t" style="left:1325.7px;top:321.97px;letter-spacing:-0.427px;">RegBinary</div>
<div class="t" style="left:1404.7px;top:321.97px;letter-spacing:-0.312px;">CD-8E-9B-43-42-A6...</div>
<div class="t" style="left:1527.2px;top:321.97px;letter-spacing:-0.236px;">4D-00-69-00</div>
<div class="a" style="left:1700px;top:322.27px;width:13.5px;height:13.5px;border:1px solid #bcbcbc;background:#fff"></div>
<div class="a" style="left:1835.7px;top:322.27px;width:13.5px;height:13.5px;border:1px solid #bcbcbc;background:#fff"></div>
<div class="a" style="left:594.5px;top:340.76px;width:1273px;height:22.77px;background:#f7f7f7"></div>
<div class="t" style="left:598.6px;top:344.74px;letter-spacing:-0.043px;">Microsoft.Windows.Apprep.ChxApp_cw5n1h2txyewy</div>
<div class="t" style="left:1325.7px;top:344.74px;letter-spacing:-0.427px;">RegBinary</div>
<div class="t" style="left:1404.7px;top:344.74px;letter-spacing:-0.207px;">57-F6-D6-8C-42-A6...</div>
<div class="t" style="left:1527.2px;top:344.74px;letter-spacing:-0.168px;">64-6F-43-6F</div>
<div class="a" style="left:1700px;top:345.04px;width:13.5px;height:13.5px;border:1px solid #bcbcbc;background:#fff"></div>
<div class="a" style="left:1835.7px;top:345.04px;width:13.5px;height:13.5px;border:1px solid #bcbcbc;background:#fff"></div>
<div class="a" style="left:594.5px;top:363.53px;width:1273px;height:22.77px;background:#fff"></div>
<div class="t" style="left:599.4px;top:367.51px;letter-spacing:-0.091px;">\Device\HarddiskVolume1\Tools\windows-networking-tools-master\windows-networking-tools-master\LatestBuilds\x64\Autoconnector.exe</div>
<div class="t" style="left:1325.7px;top:367.51px;letter-spacing:-0.427px;">RegBinary</div>
<div class="t" style="left:1404.7px;top:367.51px;letter-spacing:-0.207px;">D4-0E-2F-8F-42-A6...</div>
<div class="t" style="left:1527.2px;top:367.51px;letter-spacing:-0.170px;">6E-00-72-00</div>
<div class="a" style="left:1700px;top:367.81px;width:13.5px;height:13.5px;border:1px solid #bcbcbc;background:#fff"></div>
<div class="a" style="left:1835.7px;top:367.81px;width:13.5px;height:13.5px;border:1px solid #bcbcbc;background:#fff"></div>
<svg class="a" style="left:582.5px;top:371.11px" width="5" height="8" viewBox="0 0 5 8"><path d="M0 0L4.5 4L0 8Z" fill="#555"/></svg>
<div class="a" style="left:594.5px;top:386.30px;width:1273px;height:22.77px;background:#f7f7f7"></div>
<div class="t" style="left:599.4px;top:390.28px;letter-spacing:-0.186px;">\Device\HarddiskVolume1\Windows\System32\OpenWith.exe</div>
<div class="t" style="left:1325.7px;top:390.28px;letter-spacing:-0.427px;">RegBinary</div>
<div class="t" style="left:1404.7px;top:390.28px;letter-spacing:-0.277px;">E2-A7-FA-A6-42-A6...</div>
<div class="t" style="left:1527.2px;top:390.28px;letter-spacing:-0.036px;">00-00-00-00</div>
<div class="a" style="left:1700px;top:390.58px;width:13.5px;height:13.5px;border:1px solid #bcbcbc;background:#fff"></div>
<div class="a" style="left:1835.7px;top:390.58px;width:13.5px;height:13.5px;border:1px solid #bcbcbc;background:#fff"></div>
<div class="a" style="left:594.5px;top:409.07px;width:1273px;height:22.77px;background:#fff"></div>
<div class="t" style="left:599.4px;top:413.05px;letter-spacing:-0.163px;">\Device\HarddiskVolume1\Windows\System32\notepad.exe</div>
<div class="t" style="left:1325.7px;top:413.05px;letter-spacing:-0.427px;">RegBinary</div>
<div class="t" style="left:1404.7px;top:413.05px;letter-spacing:-0.207px;">68-5A-4E-D1-44-A6...</div>
<div class="t" style="left:1527.2px;top:413.05px;letter-spacing:-0.036px;">00-00-00-00</div>
<div class="a" style="left:1700px;top:413.35px;width:13.5px;height:13.5px;border:1px solid #bcbcbc;background:#fff"></div>
<div class="a" style="left:1835.7px;top:413.35px;width:13.5px;height:13.5px;border:1px solid #bcbcbc;background:#fff"></div>
<div class="a" style="left:594.5px;top:431.84px;width:1273px;height:22.77px;background:#f7f7f7"></div>
<div class="t" style="left:599.4px;top:435.82px;letter-spacing:-0.185px;">\Device\HarddiskVolume1\Windows\System32\WindowsPowerShell\v1.0\powershell_ise.exe</div>
<div class="t" style="left:1325.7px;top:435.82px;letter-spacing:-0.427px;">RegBinary</div>
<div class="t" style="left:1404.7px;top:435.82px;letter-spacing:-0.242px;">02-FB-1C-E9-42-A6...</div>
<div class="t" style="left:1527.2px;top:435.82px;letter-spacing:-0.369px;">10-9D-9E-00</div>
<div class="a" style="left:1700px;top:436.12px;width:13.5px;height:13.5px;border:1px solid #bcbcbc;background:#fff"></div>
<div class="a" style="left:1835.7px;top:436.12px;width:13.5px;height:13.5px;border:1px solid #bcbcbc;background:#fff"></div>
<div class="a" style="left:594.5px;top:454.61px;width:1273px;height:22.77px;background:#fff"></div>
<div class="t" style="left:599.4px;top:458.59px;letter-spacing:-0.177px;">\Device\HarddiskVolume1\Windows\System32\WindowsPowerShell\v1.0\powershell.exe</div>
<div class="t" style="left:1325.7px;top:458.59px;letter-spacing:-0.427px;">RegBinary</div>
<div class="t" style="left:1404.7px;top:458.59px;letter-spacing:-0.172px;">2D-33-47-D1-44-A6...</div>
<div class="t" style="left:1527.2px;top:458.59px;letter-spacing:-0.036px;">00-00-00-00</div>
<div class="a" style="left:1700px;top:458.89px;width:13.5px;height:13.5px;border:1px solid #bcbcbc;background:#fff"></div>
<div class="a" style="left:1835.7px;top:458.89px;width:13.5px;height:13.5px;border:1px solid #bcbcbc;background:#fff"></div>
<div class="a" style="left:594px;top:181px;width:1273px;height:1px;background:#d8d8d8"></div>
<div class="a" style="left:594px;top:204px;width:1273px;height:1px;background:#d8d8d8"></div>
<div class="a" style="left:594px;top:226px;width:1273px;height:1px;background:#d8d8d8"></div>
<div class="a" style="left:594px;top:249px;width:1273px;height:1px;background:#d8d8d8"></div>
<div class="a" style="left:594px;top:272px;width:1273px;height:1px;background:#d8d8d8"></div>
<div class="a" style="left:594px;top:295px;width:1273px;height:1px;background:#d8d8d8"></div>
<div class="a" style="left:594px;top:317px;width:1273px;height:1px;background:#d8d8d8"></div>
<div class="a" style="left:594px;top:340px;width:1273px;height:1px;background:#d8d8d8"></div>
<div class="a" style="left:594px;top:363px;width:1273px;height:1px;background:#d8d8d8"></div>
<div class="a" style="left:594px;top:386px;width:1273px;height:1px;background:#d8d8d8"></div>
<div class="a" style="left:594px;top:409px;width:1273px;height:1px;background:#d8d8d8"></div>
<div class="a" style="left:594px;top:431px;width:1273px;height:1px;background:#d8d8d8"></div>
<div class="a" style="left:594px;top:454px;width:1273px;height:1px;background:#d8d8d8"></div>
<div class="a" style="left:594px;top:477px;width:1273px;height:1px;background:#d8d8d8"></div>
<div class="a" style="left:594px;top:159px;width:1px;height:318.5px;background:#b4b4b4"></div>
<div class="a" style="left:1321px;top:159px;width:1px;height:318.5px;background:#d8d8d8"></div>
<div class="a" style="left:1400px;top:159px;width:1px;height:318.5px;background:#d8d8d8"></div>
<div class="a" style="left:1522.5px;top:159px;width:1px;height:318.5px;background:#d8d8d8"></div>
<div class="a" style="left:1645px;top:159px;width:1px;height:318.5px;background:#d8d8d8"></div>
<div class="a" style="left:1767px;top:159px;width:1px;height:318.5px;background:#d8d8d8"></div>
<div class="a" style="left:1235.2px;top:522.6px;width:2px;height:2px;background:#5e5e5e"></div>
<div class="a" style="left:1239.57px;top:522.6px;width:2px;height:2px;background:#5e5e5e"></div>
<div class="a" style="left:1243.94px;top:522.6px;width:2px;height:2px;background:#5e5e5e"></div>
<div class="a" style="left:1248.31px;top:522.6px;width:2px;height:2px;background:#5e5e5e"></div>
<div class="a" style="left:1252.68px;top:522.6px;width:2px;height:2px;background:#5e5e5e"></div>
<div class="a" style="left:572px;top:556.2px;width:1295px;height:1.6px;background:#acacac"></div>
<div class="a" style="left:572px;top:532px;width:89px;height:25px;border:1px solid #c8c8c8;border-bottom:none;background:#f8f8f8"></div>
<div class="t" style="left:585px;top:536.40px;letter-spacing:-0.117px;">Type viewer</div>
<div class="t" style="left:672px;top:536.40px;letter-spacing:-0.304px;">Slack viewer</div>
<div class="a" style="left:572px;top:556.2px;width:1.6px;height:324px;background:#acacac"></div>
<div class="a" style="left:574.8px;top:558px;width:1293px;height:321.5px;background:#fff"></div>
<div class="a" style="left:572px;top:879.5px;width:1295px;height:1.5px;background:#a8a8a8"></div>
<div class="a" style="left:666.5px;top:560.20px;letter-spacing:1.689px;font-size:12.6px;height:16px;line-height:16px;color:#9e9e9e">00</div>
<div class="a" style="left:692.52px;top:560.20px;letter-spacing:1.689px;font-size:12.6px;height:16px;line-height:16px;color:#9e9e9e">01</div>
<div class="a" style="left:718.54px;top:560.20px;letter-spacing:1.689px;font-size:12.6px;height:16px;line-height:16px;color:#9e9e9e">02</div>
<div class="a" style="left:744.56px;top:560.20px;letter-spacing:1.689px;font-size:12.6px;height:16px;line-height:16px;color:#9e9e9e">03</div>
<div class="a" style="left:770.58px;top:560.20px;letter-spacing:1.689px;font-size:12.6px;height:16px;line-height:16px;color:#9e9e9e">04</div>
<div class="a" style="left:796.6px;top:560.20px;letter-spacing:1.689px;font-size:12.6px;height:16px;line-height:16px;color:#9e9e9e">05</div>
<div class="a" style="left:822.62px;top:560.20px;letter-spacing:1.689px;font-size:12.6px;height:16px;line-height:16px;color:#9e9e9e">06</div>
<div class="a" style="left:848.64px;top:560.20px;letter-spacing:1.689px;font-size:12.6px;height:16px;line-height:16px;color:#9e9e9e">07</div>
<div class="a" style="left:874.66px;top:560.20px;letter-spacing:1.689px;font-size:12.6px;height:16px;line-height:16px;color:#9e9e9e">08</div>
<div class="a" style="left:900.6800000000001px;top:560.20px;letter-spacing:1.689px;font-size:12.6px;height:16px;line-height:16px;color:#9e9e9e">09</div>
<div class="a" style="left:926.7px;top:560.20px;letter-spacing:0.290px;font-size:12.6px;height:16px;line-height:16px;color:#9e9e9e">0A</div>
<div class="a" style="left:952.72px;top:560.20px;letter-spacing:0.290px;font-size:12.6px;height:16px;line-height:16px;color:#9e9e9e">0B</div>
<div class="a" style="left:978.74px;top:560.20px;letter-spacing:-0.403px;font-size:12.6px;height:16px;line-height:16px;color:#9e9e9e">0C</div>
<div class="a" style="left:1004.76px;top:560.20px;letter-spacing:-0.403px;font-size:12.6px;height:16px;line-height:16px;color:#9e9e9e">0D</div>
<div class="a" style="left:1030.78px;top:560.20px;letter-spacing:0.290px;font-size:12.6px;height:16px;line-height:16px;color:#9e9e9e">0E</div>
<div class="a" style="left:1056.8px;top:560.20px;letter-spacing:0.996px;font-size:12.6px;height:16px;line-height:16px;color:#9e9e9e">0F</div>
<div class="a" style="left:1082.82px;top:560.20px;letter-spacing:1.689px;font-size:12.6px;height:16px;line-height:16px;color:#9e9e9e">10</div>
<div class="a" style="left:1108.84px;top:560.20px;letter-spacing:1.703px;font-size:12.6px;height:16px;line-height:16px;color:#9e9e9e">11</div>
<div class="a" style="left:1134.8600000000001px;top:560.20px;letter-spacing:1.689px;font-size:12.6px;height:16px;line-height:16px;color:#9e9e9e">12</div>
<div class="a" style="left:1160.88px;top:560.20px;letter-spacing:1.689px;font-size:12.6px;height:16px;line-height:16px;color:#9e9e9e">13</div>
<div class="a" style="left:1186.9px;top:560.20px;letter-spacing:1.689px;font-size:12.6px;height:16px;line-height:16px;color:#9e9e9e">14</div>
<div class="a" style="left:1212.92px;top:560.20px;letter-spacing:1.689px;font-size:12.6px;height:16px;line-height:16px;color:#9e9e9e">15</div>
<div class="a" style="left:1238.94px;top:560.20px;letter-spacing:1.689px;font-size:12.6px;height:16px;line-height:16px;color:#9e9e9e">16</div>
<div class="a" style="left:1264.96px;top:560.20px;letter-spacing:1.689px;font-size:12.6px;height:16px;line-height:16px;color:#9e9e9e">17</div>
<div class="a" style="left:1290.98px;top:560.20px;letter-spacing:1.689px;font-size:12.6px;height:16px;line-height:16px;color:#9e9e9e">18</div>
<div class="a" style="left:1317.0px;top:560.20px;letter-spacing:1.689px;font-size:12.6px;height:16px;line-height:16px;color:#9e9e9e">19</div>
<div class="a" style="left:1343.02px;top:560.20px;letter-spacing:0.290px;font-size:12.6px;height:16px;line-height:16px;color:#9e9e9e">1A</div>
<div class="a" style="left:1369.04px;top:560.20px;letter-spacing:0.290px;font-size:12.6px;height:16px;line-height:16px;color:#9e9e9e">1B</div>
<div class="a" style="left:1395.06px;top:560.20px;letter-spacing:-0.403px;font-size:12.6px;height:16px;line-height:16px;color:#9e9e9e">1C</div>
<div class="a" style="left:1421.08px;top:560.20px;letter-spacing:-0.403px;font-size:12.6px;height:16px;line-height:16px;color:#9e9e9e">1D</div>
<div class="a" style="left:1447.1px;top:560.20px;letter-spacing:0.290px;font-size:12.6px;height:16px;line-height:16px;color:#9e9e9e">1E</div>
<div class="a" style="left:1473.12px;top:560.20px;letter-spacing:0.996px;font-size:12.6px;height:16px;line-height:16px;color:#9e9e9e">1F</div>
<div class="a" style="left:1499.1399999999999px;top:560.20px;letter-spacing:1.689px;font-size:12.6px;height:16px;line-height:16px;color:#9e9e9e">20</div>
<div class="a" style="left:1525.1599999999999px;top:560.20px;letter-spacing:1.689px;font-size:12.6px;height:16px;line-height:16px;color:#9e9e9e">21</div>
<div class="a" style="left:1551.1799999999998px;top:560.20px;letter-spacing:1.689px;font-size:12.6px;height:16px;line-height:16px;color:#9e9e9e">22</div>
<div class="a" style="left:580px;top:580.60px;letter-spacing:0.222px;font-size:12.6px;height:16px;line-height:16px;color:#9e9e9e">00000000</div>
<div class="a" style="left:666.5px;top:580.60px;letter-spacing:-0.403px;font-size:12.6px;height:16px;line-height:16px;color:#484848">D4</div>
<div class="a" style="left:692.52px;top:580.60px;letter-spacing:0.290px;font-size:12.6px;height:16px;line-height:16px;color:#484848">0E</div>
<div class="a" style="left:718.54px;top:580.60px;letter-spacing:0.996px;font-size:12.6px;height:16px;line-height:16px;color:#484848">2F</div>
<div class="a" style="left:744.56px;top:580.60px;letter-spacing:0.996px;font-size:12.6px;height:16px;line-height:16px;color:#484848">8F</div>
<div class="a" style="left:770.58px;top:580.60px;letter-spacing:1.689px;font-size:12.6px;height:16px;line-height:16px;color:#484848">42</div>
<div class="a" style="left:796.6px;top:580.60px;letter-spacing:0.290px;font-size:12.6px;height:16px;line-height:16px;color:#484848">A6</div>
<div class="a" style="left:822.62px;top:580.60px;letter-spacing:-1.801px;font-size:12.6px;height:16px;line-height:16px;color:#484848">DA</div>
<div class="a" style="left:848.64px;top:580.60px;letter-spacing:1.689px;font-size:12.6px;height:16px;line-height:16px;color:#484848">01</div>
<div class="a" style="left:874.66px;top:580.60px;letter-spacing:1.689px;font-size:12.6px;height:16px;line-height:16px;color:#484848">00</div>
<div class="a" style="left:900.6800000000001px;top:580.60px;letter-spacing:1.689px;font-size:12.6px;height:16px;line-height:16px;color:#484848">00</div>
<div class="a" style="left:926.7px;top:580.60px;letter-spacing:1.689px;font-size:12.6px;height:16px;line-height:16px;color:#484848">00</div>
<div class="a" style="left:952.72px;top:580.60px;letter-spacing:1.689px;font-size:12.6px;height:16px;line-height:16px;color:#484848">00</div>
<div class="a" style="left:978.74px;top:580.60px;letter-spacing:1.689px;font-size:12.6px;height:16px;line-height:16px;color:#484848">00</div>
<div class="a" style="left:1004.76px;top:580.60px;letter-spacing:1.689px;font-size:12.6px;height:16px;line-height:16px;color:#484848">00</div>
<div class="a" style="left:1030.78px;top:580.60px;letter-spacing:1.689px;font-size:12.6px;height:16px;line-height:16px;color:#484848">00</div>
<div class="a" style="left:1056.8px;top:580.60px;letter-spacing:1.689px;font-size:12.6px;height:16px;line-height:16px;color:#484848">00</div>
<div class="a" style="left:1082.82px;top:580.60px;letter-spacing:1.689px;font-size:12.6px;height:16px;line-height:16px;color:#484848">00</div>
<div class="a" style="left:1108.84px;top:580.60px;letter-spacing:1.689px;font-size:12.6px;height:16px;line-height:16px;color:#484848">00</div>
<div class="a" style="left:1134.8600000000001px;top:580.60px;letter-spacing:1.689px;font-size:12.6px;height:16px;line-height:16px;color:#484848">00</div>
<div class="a" style="left:1160.88px;top:580.60px;letter-spacing:1.689px;font-size:12.6px;height:16px;line-height:16px;color:#484848">00</div>
<div class="a" style="left:1186.9px;top:580.60px;letter-spacing:1.689px;font-size:12.6px;height:16px;line-height:16px;color:#484848">02</div>
<div class="a" style="left:1212.92px;top:580.60px;letter-spacing:1.689px;font-size:12.6px;height:16px;line-height:16px;color:#484848">00</div>
<div class="a" style="left:1238.94px;top:580.60px;letter-spacing:1.689px;font-size:12.6px;height:16px;line-height:16px;color:#484848">00</div>
<div class="a" style="left:1264.96px;top:580.60px;letter-spacing:1.689px;font-size:12.6px;height:16px;line-height:16px;color:#484848">00</div>
<div class="a" style="left:1593.5px;top:580.5px;width:10px;height:15.5px;background:#cfe8f7"></div>
<div class="a" style="left:1594px;top:580.6px;font-size:12.6px;height:16px;line-height:16px;color:#484848"><span style="display:inline-block;width:8.673px">Ô</span><span style="display:inline-block;width:8.673px">.</span><span style="display:inline-block;width:8.673px">/</span><span style="display:inline-block;width:8.673px">.</span><span style="display:inline-block;width:8.673px">B</span><span style="display:inline-block;width:8.673px">¦</span><span style="display:inline-block;width:8.673px">Ú</span><span style="display:inline-block;width:8.673px">.</span><span style="display:inline-block;width:8.673px">.</span><span style="display:inline-block;width:8.673px">.</span><span style="display:inline-block;width:8.673px">.</span><span style="display:inline-block;width:8.673px">.</span><span style="display:inline-block;width:8.673px">.</span><span style="display:inline-block;width:8.673px">.</span><span style="display:inline-block;width:8.673px">.</span><span style="display:inline-block;width:8.673px">.</span><span style="display:inline-block;width:8.673px">.</span><span style="display:inline-block;width:8.673px">.</span><span style="display:inline-block;width:8.673px">.</span><span style="display:inline-block;width:8.673px">.</span><span style="display:inline-block;width:8.673px">.</span><span style="display:inline-block;width:8.673px">.</span><span style="display:inline-block;width:8.673px">.</span><span style="display:inline-block;width:8.673px">.</span></div>
<div class="a" style="left:677.4px;top:881px;width:1px;height:23.5px;background:#d2d2d2"></div>
<div class="a" style="left:737px;top:881px;width:1px;height:23.5px;background:#d2d2d2"></div>
<div class="a" style="left:843px;top:881px;width:1px;height:23.5px;background:#d2d2d2"></div>
<div class="a" style="left:902.7px;top:881px;width:1px;height:23.5px;background:#d2d2d2"></div>
<div class="a" style="left:1783px;top:881px;width:1px;height:23.5px;background:#d2d2d2"></div>
<div class="s" style="left:582.5px;top:883.40px;letter-spacing:0.210px;">Current offset:</div>
<div class="s" style="left:687px;top:883.40px;letter-spacing:-0.265px;">0 (0x0)</div>
<div class="s" style="left:746.7px;top:883.40px;letter-spacing:-0.085px;">Bytes selected:</div>
<div class="s" style="left:853px;top:883.40px;letter-spacing:-0.331px;">0 (0x0)</div>
<div class="s" style="left:1788.2px;top:883.40px;letter-spacing:0.222px">Data interpreter</div>
<div class="a" style="left:572px;top:904px;width:1295px;height:1px;background:#d0d0d0"></div>
<div class="a" style="left:572px;top:880.5px;width:1px;height:24px;background:#d0d0d0"></div>
<div class="a" style="left:0px;top:912.2px;width:14px;height:13px;border:1px solid #a9a9a9;background:#fff;border-left:none"></div>
<div class="a" style="left:27.3px;top:908px;width:1px;height:23.5px;background:#d2d2d2"></div>
<div class="a" style="left:77.1px;top:908px;width:1px;height:23.5px;background:#d2d2d2"></div>
<div class="a" style="left:920.7px;top:908px;width:1px;height:23.5px;background:#d2d2d2"></div>
<div class="a" style="left:977.7px;top:908px;width:1px;height:23.5px;background:#d2d2d2"></div>
<div class="a" style="left:1808.2px;top:908px;width:1px;height:23.5px;background:#d2d2d2"></div>
<div class="s" style="left:40.2px;top:910.00px;letter-spacing:-0.571px;">Key:</div>
<div class="s" style="left:87.4px;top:910.00px;letter-spacing:0.024px;">ControlSet001\Services\bam\State\UserSettings\S-1-5-21-1966530601-3185510712-10604624-1008</div>
<div class="s" style="left:929.7px;top:910.00px;letter-spacing:-0.128px;">Value:</div>
<div class="s" style="left:987.4px;top:910.00px;letter-spacing:0.437px;">\Device\HarddiskVolume1\Tools\windows-networking-tools-master\windows-networking-tools-master\LatestBuilds\x64\Autoconnector.exe</div>
<div class="s" style="left:1814.3px;top:910.00px;letter-spacing:-0.005px">Collapse all</div>
<div class="a" style="left:0px;top:933.3px;width:1867px;height:1px;background:#dedede"></div>
<div class="a" style="left:142.4px;top:935px;width:1px;height:14px;background:#d2d2d2"></div>
<div class="a" style="left:221.7px;top:935px;width:1px;height:14px;background:#d2d2d2"></div>
<div class="a" style="left:356.7px;top:935px;width:1px;height:14px;background:#d2d2d2"></div>
<div class="a" style="left:562.3px;top:935px;width:1px;height:14px;background:#d2d2d2"></div>
<div class="a" style="left:1755.7px;top:935px;width:1px;height:14px;background:#d2d2d2"></div>
<div class="s" style="left:1.6px;top:935.90px;letter-spacing:-0.271px;">Selected hive: SYSTEM</div>
<div class="s" style="left:151.7px;top:935.90px;letter-spacing:-0.001px;">Last write:</div>
<div class="s" style="left:232px;top:935.90px;letter-spacing:-0.218px;">2024-05-14 21:30:04</div>
<div class="s" style="left:366.3px;top:935.90px;letter-spacing:-0.051px;">14 of 14 values shown (100.00%)</div>
<div class="s" style="left:572.6px;top:935.90px;letter-spacing:0.348px;">Copied path to clipboard</div>
<div class="s" style="left:1765.4px;top:935.90px;letter-spacing:0.060px;">Hidden keys: 0</div>
<div class="a" style="left:1862.5px;top:934px;width:4.5px;height:14px;background:#fa0008"></div>
<div class="a" style="left:0px;top:0px;width:1867px;height:2px;background:#c6dde3"></div>
<div class="a" style="left:0px;top:0px;width:1.4px;height:951px;background:#c4d9d8"></div>
<div class="a" style="left:0px;top:948.6px;width:1867px;height:2.4px;background:#bcd8e2"></div>
</body></html>
